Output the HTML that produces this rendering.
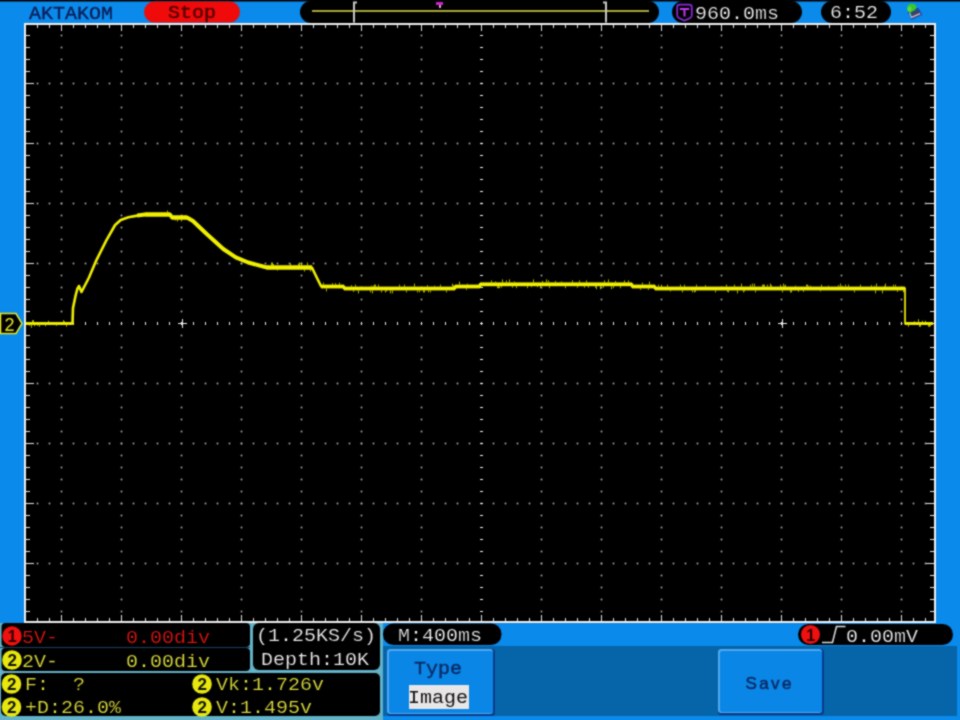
<!DOCTYPE html>
<html><head><meta charset="utf-8"><style>
html,body{margin:0;padding:0;width:960px;height:720px;overflow:hidden;background:#0a8aea}
svg{display:block;will-change:transform}
text{font-family:"Liberation Mono",monospace;white-space:pre}
text.sans{font-family:"Liberation Sans",sans-serif}
</style></head><body>
<svg width="960" height="720" viewBox="0 0 960 720">
<defs><filter id="bl" x="0" y="0" width="960" height="720" filterUnits="userSpaceOnUse" color-interpolation-filters="sRGB"><feConvolveMatrix order="3" kernelMatrix="1 2 1 2 8 2 1 2 1" divisor="20" edgeMode="duplicate" preserveAlpha="true"/></filter></defs>
<g filter="url(#bl)">
<rect x="0" y="0" width="960" height="720" fill="#0a8aea"/><rect x="0" y="0" width="960" height="1" fill="#000"/><rect x="0" y="1" width="960" height="1" fill="#05457a"/><rect x="24" y="23" width="912" height="600" fill="#f0f0f0"/><rect x="26" y="25" width="908" height="596" fill="#000"/><g fill="#a8a8a8"><circle cx="61.5" cy="35.5" r="0.95"/><circle cx="61.5" cy="47.5" r="0.95"/><circle cx="61.5" cy="59.5" r="0.95"/><circle cx="61.5" cy="71.5" r="0.95"/><circle cx="61.5" cy="83.5" r="0.95"/><circle cx="61.5" cy="95.5" r="0.95"/><circle cx="61.5" cy="107.5" r="0.95"/><circle cx="61.5" cy="119.5" r="0.95"/><circle cx="61.5" cy="131.5" r="0.95"/><circle cx="61.5" cy="143.5" r="0.95"/><circle cx="61.5" cy="155.5" r="0.95"/><circle cx="61.5" cy="167.5" r="0.95"/><circle cx="61.5" cy="179.5" r="0.95"/><circle cx="61.5" cy="191.5" r="0.95"/><circle cx="61.5" cy="203.5" r="0.95"/><circle cx="61.5" cy="215.5" r="0.95"/><circle cx="61.5" cy="227.5" r="0.95"/><circle cx="61.5" cy="239.5" r="0.95"/><circle cx="61.5" cy="251.5" r="0.95"/><circle cx="61.5" cy="263.5" r="0.95"/><circle cx="61.5" cy="275.5" r="0.95"/><circle cx="61.5" cy="287.5" r="0.95"/><circle cx="61.5" cy="299.5" r="0.95"/><circle cx="61.5" cy="311.5" r="0.95"/><circle cx="61.5" cy="323.5" r="0.95"/><circle cx="61.5" cy="335.5" r="0.95"/><circle cx="61.5" cy="347.5" r="0.95"/><circle cx="61.5" cy="359.5" r="0.95"/><circle cx="61.5" cy="371.5" r="0.95"/><circle cx="61.5" cy="383.5" r="0.95"/><circle cx="61.5" cy="395.5" r="0.95"/><circle cx="61.5" cy="407.5" r="0.95"/><circle cx="61.5" cy="419.5" r="0.95"/><circle cx="61.5" cy="431.5" r="0.95"/><circle cx="61.5" cy="443.5" r="0.95"/><circle cx="61.5" cy="455.5" r="0.95"/><circle cx="61.5" cy="467.5" r="0.95"/><circle cx="61.5" cy="479.5" r="0.95"/><circle cx="61.5" cy="491.5" r="0.95"/><circle cx="61.5" cy="503.5" r="0.95"/><circle cx="61.5" cy="515.5" r="0.95"/><circle cx="61.5" cy="527.5" r="0.95"/><circle cx="61.5" cy="539.5" r="0.95"/><circle cx="61.5" cy="551.5" r="0.95"/><circle cx="61.5" cy="563.5" r="0.95"/><circle cx="61.5" cy="575.5" r="0.95"/><circle cx="61.5" cy="587.5" r="0.95"/><circle cx="61.5" cy="599.5" r="0.95"/><circle cx="61.5" cy="611.5" r="0.95"/><circle cx="121.5" cy="35.5" r="0.95"/><circle cx="121.5" cy="47.5" r="0.95"/><circle cx="121.5" cy="59.5" r="0.95"/><circle cx="121.5" cy="71.5" r="0.95"/><circle cx="121.5" cy="83.5" r="0.95"/><circle cx="121.5" cy="95.5" r="0.95"/><circle cx="121.5" cy="107.5" r="0.95"/><circle cx="121.5" cy="119.5" r="0.95"/><circle cx="121.5" cy="131.5" r="0.95"/><circle cx="121.5" cy="143.5" r="0.95"/><circle cx="121.5" cy="155.5" r="0.95"/><circle cx="121.5" cy="167.5" r="0.95"/><circle cx="121.5" cy="179.5" r="0.95"/><circle cx="121.5" cy="191.5" r="0.95"/><circle cx="121.5" cy="203.5" r="0.95"/><circle cx="121.5" cy="215.5" r="0.95"/><circle cx="121.5" cy="227.5" r="0.95"/><circle cx="121.5" cy="239.5" r="0.95"/><circle cx="121.5" cy="251.5" r="0.95"/><circle cx="121.5" cy="263.5" r="0.95"/><circle cx="121.5" cy="275.5" r="0.95"/><circle cx="121.5" cy="287.5" r="0.95"/><circle cx="121.5" cy="299.5" r="0.95"/><circle cx="121.5" cy="311.5" r="0.95"/><circle cx="121.5" cy="323.5" r="0.95"/><circle cx="121.5" cy="335.5" r="0.95"/><circle cx="121.5" cy="347.5" r="0.95"/><circle cx="121.5" cy="359.5" r="0.95"/><circle cx="121.5" cy="371.5" r="0.95"/><circle cx="121.5" cy="383.5" r="0.95"/><circle cx="121.5" cy="395.5" r="0.95"/><circle cx="121.5" cy="407.5" r="0.95"/><circle cx="121.5" cy="419.5" r="0.95"/><circle cx="121.5" cy="431.5" r="0.95"/><circle cx="121.5" cy="443.5" r="0.95"/><circle cx="121.5" cy="455.5" r="0.95"/><circle cx="121.5" cy="467.5" r="0.95"/><circle cx="121.5" cy="479.5" r="0.95"/><circle cx="121.5" cy="491.5" r="0.95"/><circle cx="121.5" cy="503.5" r="0.95"/><circle cx="121.5" cy="515.5" r="0.95"/><circle cx="121.5" cy="527.5" r="0.95"/><circle cx="121.5" cy="539.5" r="0.95"/><circle cx="121.5" cy="551.5" r="0.95"/><circle cx="121.5" cy="563.5" r="0.95"/><circle cx="121.5" cy="575.5" r="0.95"/><circle cx="121.5" cy="587.5" r="0.95"/><circle cx="121.5" cy="599.5" r="0.95"/><circle cx="121.5" cy="611.5" r="0.95"/><circle cx="181.5" cy="35.5" r="0.95"/><circle cx="181.5" cy="47.5" r="0.95"/><circle cx="181.5" cy="59.5" r="0.95"/><circle cx="181.5" cy="71.5" r="0.95"/><circle cx="181.5" cy="83.5" r="0.95"/><circle cx="181.5" cy="95.5" r="0.95"/><circle cx="181.5" cy="107.5" r="0.95"/><circle cx="181.5" cy="119.5" r="0.95"/><circle cx="181.5" cy="131.5" r="0.95"/><circle cx="181.5" cy="143.5" r="0.95"/><circle cx="181.5" cy="155.5" r="0.95"/><circle cx="181.5" cy="167.5" r="0.95"/><circle cx="181.5" cy="179.5" r="0.95"/><circle cx="181.5" cy="191.5" r="0.95"/><circle cx="181.5" cy="203.5" r="0.95"/><circle cx="181.5" cy="215.5" r="0.95"/><circle cx="181.5" cy="227.5" r="0.95"/><circle cx="181.5" cy="239.5" r="0.95"/><circle cx="181.5" cy="251.5" r="0.95"/><circle cx="181.5" cy="263.5" r="0.95"/><circle cx="181.5" cy="275.5" r="0.95"/><circle cx="181.5" cy="287.5" r="0.95"/><circle cx="181.5" cy="299.5" r="0.95"/><circle cx="181.5" cy="311.5" r="0.95"/><circle cx="181.5" cy="323.5" r="0.95"/><circle cx="181.5" cy="335.5" r="0.95"/><circle cx="181.5" cy="347.5" r="0.95"/><circle cx="181.5" cy="359.5" r="0.95"/><circle cx="181.5" cy="371.5" r="0.95"/><circle cx="181.5" cy="383.5" r="0.95"/><circle cx="181.5" cy="395.5" r="0.95"/><circle cx="181.5" cy="407.5" r="0.95"/><circle cx="181.5" cy="419.5" r="0.95"/><circle cx="181.5" cy="431.5" r="0.95"/><circle cx="181.5" cy="443.5" r="0.95"/><circle cx="181.5" cy="455.5" r="0.95"/><circle cx="181.5" cy="467.5" r="0.95"/><circle cx="181.5" cy="479.5" r="0.95"/><circle cx="181.5" cy="491.5" r="0.95"/><circle cx="181.5" cy="503.5" r="0.95"/><circle cx="181.5" cy="515.5" r="0.95"/><circle cx="181.5" cy="527.5" r="0.95"/><circle cx="181.5" cy="539.5" r="0.95"/><circle cx="181.5" cy="551.5" r="0.95"/><circle cx="181.5" cy="563.5" r="0.95"/><circle cx="181.5" cy="575.5" r="0.95"/><circle cx="181.5" cy="587.5" r="0.95"/><circle cx="181.5" cy="599.5" r="0.95"/><circle cx="181.5" cy="611.5" r="0.95"/><circle cx="241.5" cy="35.5" r="0.95"/><circle cx="241.5" cy="47.5" r="0.95"/><circle cx="241.5" cy="59.5" r="0.95"/><circle cx="241.5" cy="71.5" r="0.95"/><circle cx="241.5" cy="83.5" r="0.95"/><circle cx="241.5" cy="95.5" r="0.95"/><circle cx="241.5" cy="107.5" r="0.95"/><circle cx="241.5" cy="119.5" r="0.95"/><circle cx="241.5" cy="131.5" r="0.95"/><circle cx="241.5" cy="143.5" r="0.95"/><circle cx="241.5" cy="155.5" r="0.95"/><circle cx="241.5" cy="167.5" r="0.95"/><circle cx="241.5" cy="179.5" r="0.95"/><circle cx="241.5" cy="191.5" r="0.95"/><circle cx="241.5" cy="203.5" r="0.95"/><circle cx="241.5" cy="215.5" r="0.95"/><circle cx="241.5" cy="227.5" r="0.95"/><circle cx="241.5" cy="239.5" r="0.95"/><circle cx="241.5" cy="251.5" r="0.95"/><circle cx="241.5" cy="263.5" r="0.95"/><circle cx="241.5" cy="275.5" r="0.95"/><circle cx="241.5" cy="287.5" r="0.95"/><circle cx="241.5" cy="299.5" r="0.95"/><circle cx="241.5" cy="311.5" r="0.95"/><circle cx="241.5" cy="323.5" r="0.95"/><circle cx="241.5" cy="335.5" r="0.95"/><circle cx="241.5" cy="347.5" r="0.95"/><circle cx="241.5" cy="359.5" r="0.95"/><circle cx="241.5" cy="371.5" r="0.95"/><circle cx="241.5" cy="383.5" r="0.95"/><circle cx="241.5" cy="395.5" r="0.95"/><circle cx="241.5" cy="407.5" r="0.95"/><circle cx="241.5" cy="419.5" r="0.95"/><circle cx="241.5" cy="431.5" r="0.95"/><circle cx="241.5" cy="443.5" r="0.95"/><circle cx="241.5" cy="455.5" r="0.95"/><circle cx="241.5" cy="467.5" r="0.95"/><circle cx="241.5" cy="479.5" r="0.95"/><circle cx="241.5" cy="491.5" r="0.95"/><circle cx="241.5" cy="503.5" r="0.95"/><circle cx="241.5" cy="515.5" r="0.95"/><circle cx="241.5" cy="527.5" r="0.95"/><circle cx="241.5" cy="539.5" r="0.95"/><circle cx="241.5" cy="551.5" r="0.95"/><circle cx="241.5" cy="563.5" r="0.95"/><circle cx="241.5" cy="575.5" r="0.95"/><circle cx="241.5" cy="587.5" r="0.95"/><circle cx="241.5" cy="599.5" r="0.95"/><circle cx="241.5" cy="611.5" r="0.95"/><circle cx="301.5" cy="35.5" r="0.95"/><circle cx="301.5" cy="47.5" r="0.95"/><circle cx="301.5" cy="59.5" r="0.95"/><circle cx="301.5" cy="71.5" r="0.95"/><circle cx="301.5" cy="83.5" r="0.95"/><circle cx="301.5" cy="95.5" r="0.95"/><circle cx="301.5" cy="107.5" r="0.95"/><circle cx="301.5" cy="119.5" r="0.95"/><circle cx="301.5" cy="131.5" r="0.95"/><circle cx="301.5" cy="143.5" r="0.95"/><circle cx="301.5" cy="155.5" r="0.95"/><circle cx="301.5" cy="167.5" r="0.95"/><circle cx="301.5" cy="179.5" r="0.95"/><circle cx="301.5" cy="191.5" r="0.95"/><circle cx="301.5" cy="203.5" r="0.95"/><circle cx="301.5" cy="215.5" r="0.95"/><circle cx="301.5" cy="227.5" r="0.95"/><circle cx="301.5" cy="239.5" r="0.95"/><circle cx="301.5" cy="251.5" r="0.95"/><circle cx="301.5" cy="263.5" r="0.95"/><circle cx="301.5" cy="275.5" r="0.95"/><circle cx="301.5" cy="287.5" r="0.95"/><circle cx="301.5" cy="299.5" r="0.95"/><circle cx="301.5" cy="311.5" r="0.95"/><circle cx="301.5" cy="323.5" r="0.95"/><circle cx="301.5" cy="335.5" r="0.95"/><circle cx="301.5" cy="347.5" r="0.95"/><circle cx="301.5" cy="359.5" r="0.95"/><circle cx="301.5" cy="371.5" r="0.95"/><circle cx="301.5" cy="383.5" r="0.95"/><circle cx="301.5" cy="395.5" r="0.95"/><circle cx="301.5" cy="407.5" r="0.95"/><circle cx="301.5" cy="419.5" r="0.95"/><circle cx="301.5" cy="431.5" r="0.95"/><circle cx="301.5" cy="443.5" r="0.95"/><circle cx="301.5" cy="455.5" r="0.95"/><circle cx="301.5" cy="467.5" r="0.95"/><circle cx="301.5" cy="479.5" r="0.95"/><circle cx="301.5" cy="491.5" r="0.95"/><circle cx="301.5" cy="503.5" r="0.95"/><circle cx="301.5" cy="515.5" r="0.95"/><circle cx="301.5" cy="527.5" r="0.95"/><circle cx="301.5" cy="539.5" r="0.95"/><circle cx="301.5" cy="551.5" r="0.95"/><circle cx="301.5" cy="563.5" r="0.95"/><circle cx="301.5" cy="575.5" r="0.95"/><circle cx="301.5" cy="587.5" r="0.95"/><circle cx="301.5" cy="599.5" r="0.95"/><circle cx="301.5" cy="611.5" r="0.95"/><circle cx="361.5" cy="35.5" r="0.95"/><circle cx="361.5" cy="47.5" r="0.95"/><circle cx="361.5" cy="59.5" r="0.95"/><circle cx="361.5" cy="71.5" r="0.95"/><circle cx="361.5" cy="83.5" r="0.95"/><circle cx="361.5" cy="95.5" r="0.95"/><circle cx="361.5" cy="107.5" r="0.95"/><circle cx="361.5" cy="119.5" r="0.95"/><circle cx="361.5" cy="131.5" r="0.95"/><circle cx="361.5" cy="143.5" r="0.95"/><circle cx="361.5" cy="155.5" r="0.95"/><circle cx="361.5" cy="167.5" r="0.95"/><circle cx="361.5" cy="179.5" r="0.95"/><circle cx="361.5" cy="191.5" r="0.95"/><circle cx="361.5" cy="203.5" r="0.95"/><circle cx="361.5" cy="215.5" r="0.95"/><circle cx="361.5" cy="227.5" r="0.95"/><circle cx="361.5" cy="239.5" r="0.95"/><circle cx="361.5" cy="251.5" r="0.95"/><circle cx="361.5" cy="263.5" r="0.95"/><circle cx="361.5" cy="275.5" r="0.95"/><circle cx="361.5" cy="287.5" r="0.95"/><circle cx="361.5" cy="299.5" r="0.95"/><circle cx="361.5" cy="311.5" r="0.95"/><circle cx="361.5" cy="323.5" r="0.95"/><circle cx="361.5" cy="335.5" r="0.95"/><circle cx="361.5" cy="347.5" r="0.95"/><circle cx="361.5" cy="359.5" r="0.95"/><circle cx="361.5" cy="371.5" r="0.95"/><circle cx="361.5" cy="383.5" r="0.95"/><circle cx="361.5" cy="395.5" r="0.95"/><circle cx="361.5" cy="407.5" r="0.95"/><circle cx="361.5" cy="419.5" r="0.95"/><circle cx="361.5" cy="431.5" r="0.95"/><circle cx="361.5" cy="443.5" r="0.95"/><circle cx="361.5" cy="455.5" r="0.95"/><circle cx="361.5" cy="467.5" r="0.95"/><circle cx="361.5" cy="479.5" r="0.95"/><circle cx="361.5" cy="491.5" r="0.95"/><circle cx="361.5" cy="503.5" r="0.95"/><circle cx="361.5" cy="515.5" r="0.95"/><circle cx="361.5" cy="527.5" r="0.95"/><circle cx="361.5" cy="539.5" r="0.95"/><circle cx="361.5" cy="551.5" r="0.95"/><circle cx="361.5" cy="563.5" r="0.95"/><circle cx="361.5" cy="575.5" r="0.95"/><circle cx="361.5" cy="587.5" r="0.95"/><circle cx="361.5" cy="599.5" r="0.95"/><circle cx="361.5" cy="611.5" r="0.95"/><circle cx="421.5" cy="35.5" r="0.95"/><circle cx="421.5" cy="47.5" r="0.95"/><circle cx="421.5" cy="59.5" r="0.95"/><circle cx="421.5" cy="71.5" r="0.95"/><circle cx="421.5" cy="83.5" r="0.95"/><circle cx="421.5" cy="95.5" r="0.95"/><circle cx="421.5" cy="107.5" r="0.95"/><circle cx="421.5" cy="119.5" r="0.95"/><circle cx="421.5" cy="131.5" r="0.95"/><circle cx="421.5" cy="143.5" r="0.95"/><circle cx="421.5" cy="155.5" r="0.95"/><circle cx="421.5" cy="167.5" r="0.95"/><circle cx="421.5" cy="179.5" r="0.95"/><circle cx="421.5" cy="191.5" r="0.95"/><circle cx="421.5" cy="203.5" r="0.95"/><circle cx="421.5" cy="215.5" r="0.95"/><circle cx="421.5" cy="227.5" r="0.95"/><circle cx="421.5" cy="239.5" r="0.95"/><circle cx="421.5" cy="251.5" r="0.95"/><circle cx="421.5" cy="263.5" r="0.95"/><circle cx="421.5" cy="275.5" r="0.95"/><circle cx="421.5" cy="287.5" r="0.95"/><circle cx="421.5" cy="299.5" r="0.95"/><circle cx="421.5" cy="311.5" r="0.95"/><circle cx="421.5" cy="323.5" r="0.95"/><circle cx="421.5" cy="335.5" r="0.95"/><circle cx="421.5" cy="347.5" r="0.95"/><circle cx="421.5" cy="359.5" r="0.95"/><circle cx="421.5" cy="371.5" r="0.95"/><circle cx="421.5" cy="383.5" r="0.95"/><circle cx="421.5" cy="395.5" r="0.95"/><circle cx="421.5" cy="407.5" r="0.95"/><circle cx="421.5" cy="419.5" r="0.95"/><circle cx="421.5" cy="431.5" r="0.95"/><circle cx="421.5" cy="443.5" r="0.95"/><circle cx="421.5" cy="455.5" r="0.95"/><circle cx="421.5" cy="467.5" r="0.95"/><circle cx="421.5" cy="479.5" r="0.95"/><circle cx="421.5" cy="491.5" r="0.95"/><circle cx="421.5" cy="503.5" r="0.95"/><circle cx="421.5" cy="515.5" r="0.95"/><circle cx="421.5" cy="527.5" r="0.95"/><circle cx="421.5" cy="539.5" r="0.95"/><circle cx="421.5" cy="551.5" r="0.95"/><circle cx="421.5" cy="563.5" r="0.95"/><circle cx="421.5" cy="575.5" r="0.95"/><circle cx="421.5" cy="587.5" r="0.95"/><circle cx="421.5" cy="599.5" r="0.95"/><circle cx="421.5" cy="611.5" r="0.95"/><circle cx="541.5" cy="35.5" r="0.95"/><circle cx="541.5" cy="47.5" r="0.95"/><circle cx="541.5" cy="59.5" r="0.95"/><circle cx="541.5" cy="71.5" r="0.95"/><circle cx="541.5" cy="83.5" r="0.95"/><circle cx="541.5" cy="95.5" r="0.95"/><circle cx="541.5" cy="107.5" r="0.95"/><circle cx="541.5" cy="119.5" r="0.95"/><circle cx="541.5" cy="131.5" r="0.95"/><circle cx="541.5" cy="143.5" r="0.95"/><circle cx="541.5" cy="155.5" r="0.95"/><circle cx="541.5" cy="167.5" r="0.95"/><circle cx="541.5" cy="179.5" r="0.95"/><circle cx="541.5" cy="191.5" r="0.95"/><circle cx="541.5" cy="203.5" r="0.95"/><circle cx="541.5" cy="215.5" r="0.95"/><circle cx="541.5" cy="227.5" r="0.95"/><circle cx="541.5" cy="239.5" r="0.95"/><circle cx="541.5" cy="251.5" r="0.95"/><circle cx="541.5" cy="263.5" r="0.95"/><circle cx="541.5" cy="275.5" r="0.95"/><circle cx="541.5" cy="287.5" r="0.95"/><circle cx="541.5" cy="299.5" r="0.95"/><circle cx="541.5" cy="311.5" r="0.95"/><circle cx="541.5" cy="323.5" r="0.95"/><circle cx="541.5" cy="335.5" r="0.95"/><circle cx="541.5" cy="347.5" r="0.95"/><circle cx="541.5" cy="359.5" r="0.95"/><circle cx="541.5" cy="371.5" r="0.95"/><circle cx="541.5" cy="383.5" r="0.95"/><circle cx="541.5" cy="395.5" r="0.95"/><circle cx="541.5" cy="407.5" r="0.95"/><circle cx="541.5" cy="419.5" r="0.95"/><circle cx="541.5" cy="431.5" r="0.95"/><circle cx="541.5" cy="443.5" r="0.95"/><circle cx="541.5" cy="455.5" r="0.95"/><circle cx="541.5" cy="467.5" r="0.95"/><circle cx="541.5" cy="479.5" r="0.95"/><circle cx="541.5" cy="491.5" r="0.95"/><circle cx="541.5" cy="503.5" r="0.95"/><circle cx="541.5" cy="515.5" r="0.95"/><circle cx="541.5" cy="527.5" r="0.95"/><circle cx="541.5" cy="539.5" r="0.95"/><circle cx="541.5" cy="551.5" r="0.95"/><circle cx="541.5" cy="563.5" r="0.95"/><circle cx="541.5" cy="575.5" r="0.95"/><circle cx="541.5" cy="587.5" r="0.95"/><circle cx="541.5" cy="599.5" r="0.95"/><circle cx="541.5" cy="611.5" r="0.95"/><circle cx="601.5" cy="35.5" r="0.95"/><circle cx="601.5" cy="47.5" r="0.95"/><circle cx="601.5" cy="59.5" r="0.95"/><circle cx="601.5" cy="71.5" r="0.95"/><circle cx="601.5" cy="83.5" r="0.95"/><circle cx="601.5" cy="95.5" r="0.95"/><circle cx="601.5" cy="107.5" r="0.95"/><circle cx="601.5" cy="119.5" r="0.95"/><circle cx="601.5" cy="131.5" r="0.95"/><circle cx="601.5" cy="143.5" r="0.95"/><circle cx="601.5" cy="155.5" r="0.95"/><circle cx="601.5" cy="167.5" r="0.95"/><circle cx="601.5" cy="179.5" r="0.95"/><circle cx="601.5" cy="191.5" r="0.95"/><circle cx="601.5" cy="203.5" r="0.95"/><circle cx="601.5" cy="215.5" r="0.95"/><circle cx="601.5" cy="227.5" r="0.95"/><circle cx="601.5" cy="239.5" r="0.95"/><circle cx="601.5" cy="251.5" r="0.95"/><circle cx="601.5" cy="263.5" r="0.95"/><circle cx="601.5" cy="275.5" r="0.95"/><circle cx="601.5" cy="287.5" r="0.95"/><circle cx="601.5" cy="299.5" r="0.95"/><circle cx="601.5" cy="311.5" r="0.95"/><circle cx="601.5" cy="323.5" r="0.95"/><circle cx="601.5" cy="335.5" r="0.95"/><circle cx="601.5" cy="347.5" r="0.95"/><circle cx="601.5" cy="359.5" r="0.95"/><circle cx="601.5" cy="371.5" r="0.95"/><circle cx="601.5" cy="383.5" r="0.95"/><circle cx="601.5" cy="395.5" r="0.95"/><circle cx="601.5" cy="407.5" r="0.95"/><circle cx="601.5" cy="419.5" r="0.95"/><circle cx="601.5" cy="431.5" r="0.95"/><circle cx="601.5" cy="443.5" r="0.95"/><circle cx="601.5" cy="455.5" r="0.95"/><circle cx="601.5" cy="467.5" r="0.95"/><circle cx="601.5" cy="479.5" r="0.95"/><circle cx="601.5" cy="491.5" r="0.95"/><circle cx="601.5" cy="503.5" r="0.95"/><circle cx="601.5" cy="515.5" r="0.95"/><circle cx="601.5" cy="527.5" r="0.95"/><circle cx="601.5" cy="539.5" r="0.95"/><circle cx="601.5" cy="551.5" r="0.95"/><circle cx="601.5" cy="563.5" r="0.95"/><circle cx="601.5" cy="575.5" r="0.95"/><circle cx="601.5" cy="587.5" r="0.95"/><circle cx="601.5" cy="599.5" r="0.95"/><circle cx="601.5" cy="611.5" r="0.95"/><circle cx="661.5" cy="35.5" r="0.95"/><circle cx="661.5" cy="47.5" r="0.95"/><circle cx="661.5" cy="59.5" r="0.95"/><circle cx="661.5" cy="71.5" r="0.95"/><circle cx="661.5" cy="83.5" r="0.95"/><circle cx="661.5" cy="95.5" r="0.95"/><circle cx="661.5" cy="107.5" r="0.95"/><circle cx="661.5" cy="119.5" r="0.95"/><circle cx="661.5" cy="131.5" r="0.95"/><circle cx="661.5" cy="143.5" r="0.95"/><circle cx="661.5" cy="155.5" r="0.95"/><circle cx="661.5" cy="167.5" r="0.95"/><circle cx="661.5" cy="179.5" r="0.95"/><circle cx="661.5" cy="191.5" r="0.95"/><circle cx="661.5" cy="203.5" r="0.95"/><circle cx="661.5" cy="215.5" r="0.95"/><circle cx="661.5" cy="227.5" r="0.95"/><circle cx="661.5" cy="239.5" r="0.95"/><circle cx="661.5" cy="251.5" r="0.95"/><circle cx="661.5" cy="263.5" r="0.95"/><circle cx="661.5" cy="275.5" r="0.95"/><circle cx="661.5" cy="287.5" r="0.95"/><circle cx="661.5" cy="299.5" r="0.95"/><circle cx="661.5" cy="311.5" r="0.95"/><circle cx="661.5" cy="323.5" r="0.95"/><circle cx="661.5" cy="335.5" r="0.95"/><circle cx="661.5" cy="347.5" r="0.95"/><circle cx="661.5" cy="359.5" r="0.95"/><circle cx="661.5" cy="371.5" r="0.95"/><circle cx="661.5" cy="383.5" r="0.95"/><circle cx="661.5" cy="395.5" r="0.95"/><circle cx="661.5" cy="407.5" r="0.95"/><circle cx="661.5" cy="419.5" r="0.95"/><circle cx="661.5" cy="431.5" r="0.95"/><circle cx="661.5" cy="443.5" r="0.95"/><circle cx="661.5" cy="455.5" r="0.95"/><circle cx="661.5" cy="467.5" r="0.95"/><circle cx="661.5" cy="479.5" r="0.95"/><circle cx="661.5" cy="491.5" r="0.95"/><circle cx="661.5" cy="503.5" r="0.95"/><circle cx="661.5" cy="515.5" r="0.95"/><circle cx="661.5" cy="527.5" r="0.95"/><circle cx="661.5" cy="539.5" r="0.95"/><circle cx="661.5" cy="551.5" r="0.95"/><circle cx="661.5" cy="563.5" r="0.95"/><circle cx="661.5" cy="575.5" r="0.95"/><circle cx="661.5" cy="587.5" r="0.95"/><circle cx="661.5" cy="599.5" r="0.95"/><circle cx="661.5" cy="611.5" r="0.95"/><circle cx="721.5" cy="35.5" r="0.95"/><circle cx="721.5" cy="47.5" r="0.95"/><circle cx="721.5" cy="59.5" r="0.95"/><circle cx="721.5" cy="71.5" r="0.95"/><circle cx="721.5" cy="83.5" r="0.95"/><circle cx="721.5" cy="95.5" r="0.95"/><circle cx="721.5" cy="107.5" r="0.95"/><circle cx="721.5" cy="119.5" r="0.95"/><circle cx="721.5" cy="131.5" r="0.95"/><circle cx="721.5" cy="143.5" r="0.95"/><circle cx="721.5" cy="155.5" r="0.95"/><circle cx="721.5" cy="167.5" r="0.95"/><circle cx="721.5" cy="179.5" r="0.95"/><circle cx="721.5" cy="191.5" r="0.95"/><circle cx="721.5" cy="203.5" r="0.95"/><circle cx="721.5" cy="215.5" r="0.95"/><circle cx="721.5" cy="227.5" r="0.95"/><circle cx="721.5" cy="239.5" r="0.95"/><circle cx="721.5" cy="251.5" r="0.95"/><circle cx="721.5" cy="263.5" r="0.95"/><circle cx="721.5" cy="275.5" r="0.95"/><circle cx="721.5" cy="287.5" r="0.95"/><circle cx="721.5" cy="299.5" r="0.95"/><circle cx="721.5" cy="311.5" r="0.95"/><circle cx="721.5" cy="323.5" r="0.95"/><circle cx="721.5" cy="335.5" r="0.95"/><circle cx="721.5" cy="347.5" r="0.95"/><circle cx="721.5" cy="359.5" r="0.95"/><circle cx="721.5" cy="371.5" r="0.95"/><circle cx="721.5" cy="383.5" r="0.95"/><circle cx="721.5" cy="395.5" r="0.95"/><circle cx="721.5" cy="407.5" r="0.95"/><circle cx="721.5" cy="419.5" r="0.95"/><circle cx="721.5" cy="431.5" r="0.95"/><circle cx="721.5" cy="443.5" r="0.95"/><circle cx="721.5" cy="455.5" r="0.95"/><circle cx="721.5" cy="467.5" r="0.95"/><circle cx="721.5" cy="479.5" r="0.95"/><circle cx="721.5" cy="491.5" r="0.95"/><circle cx="721.5" cy="503.5" r="0.95"/><circle cx="721.5" cy="515.5" r="0.95"/><circle cx="721.5" cy="527.5" r="0.95"/><circle cx="721.5" cy="539.5" r="0.95"/><circle cx="721.5" cy="551.5" r="0.95"/><circle cx="721.5" cy="563.5" r="0.95"/><circle cx="721.5" cy="575.5" r="0.95"/><circle cx="721.5" cy="587.5" r="0.95"/><circle cx="721.5" cy="599.5" r="0.95"/><circle cx="721.5" cy="611.5" r="0.95"/><circle cx="781.5" cy="35.5" r="0.95"/><circle cx="781.5" cy="47.5" r="0.95"/><circle cx="781.5" cy="59.5" r="0.95"/><circle cx="781.5" cy="71.5" r="0.95"/><circle cx="781.5" cy="83.5" r="0.95"/><circle cx="781.5" cy="95.5" r="0.95"/><circle cx="781.5" cy="107.5" r="0.95"/><circle cx="781.5" cy="119.5" r="0.95"/><circle cx="781.5" cy="131.5" r="0.95"/><circle cx="781.5" cy="143.5" r="0.95"/><circle cx="781.5" cy="155.5" r="0.95"/><circle cx="781.5" cy="167.5" r="0.95"/><circle cx="781.5" cy="179.5" r="0.95"/><circle cx="781.5" cy="191.5" r="0.95"/><circle cx="781.5" cy="203.5" r="0.95"/><circle cx="781.5" cy="215.5" r="0.95"/><circle cx="781.5" cy="227.5" r="0.95"/><circle cx="781.5" cy="239.5" r="0.95"/><circle cx="781.5" cy="251.5" r="0.95"/><circle cx="781.5" cy="263.5" r="0.95"/><circle cx="781.5" cy="275.5" r="0.95"/><circle cx="781.5" cy="287.5" r="0.95"/><circle cx="781.5" cy="299.5" r="0.95"/><circle cx="781.5" cy="311.5" r="0.95"/><circle cx="781.5" cy="323.5" r="0.95"/><circle cx="781.5" cy="335.5" r="0.95"/><circle cx="781.5" cy="347.5" r="0.95"/><circle cx="781.5" cy="359.5" r="0.95"/><circle cx="781.5" cy="371.5" r="0.95"/><circle cx="781.5" cy="383.5" r="0.95"/><circle cx="781.5" cy="395.5" r="0.95"/><circle cx="781.5" cy="407.5" r="0.95"/><circle cx="781.5" cy="419.5" r="0.95"/><circle cx="781.5" cy="431.5" r="0.95"/><circle cx="781.5" cy="443.5" r="0.95"/><circle cx="781.5" cy="455.5" r="0.95"/><circle cx="781.5" cy="467.5" r="0.95"/><circle cx="781.5" cy="479.5" r="0.95"/><circle cx="781.5" cy="491.5" r="0.95"/><circle cx="781.5" cy="503.5" r="0.95"/><circle cx="781.5" cy="515.5" r="0.95"/><circle cx="781.5" cy="527.5" r="0.95"/><circle cx="781.5" cy="539.5" r="0.95"/><circle cx="781.5" cy="551.5" r="0.95"/><circle cx="781.5" cy="563.5" r="0.95"/><circle cx="781.5" cy="575.5" r="0.95"/><circle cx="781.5" cy="587.5" r="0.95"/><circle cx="781.5" cy="599.5" r="0.95"/><circle cx="781.5" cy="611.5" r="0.95"/><circle cx="841.5" cy="35.5" r="0.95"/><circle cx="841.5" cy="47.5" r="0.95"/><circle cx="841.5" cy="59.5" r="0.95"/><circle cx="841.5" cy="71.5" r="0.95"/><circle cx="841.5" cy="83.5" r="0.95"/><circle cx="841.5" cy="95.5" r="0.95"/><circle cx="841.5" cy="107.5" r="0.95"/><circle cx="841.5" cy="119.5" r="0.95"/><circle cx="841.5" cy="131.5" r="0.95"/><circle cx="841.5" cy="143.5" r="0.95"/><circle cx="841.5" cy="155.5" r="0.95"/><circle cx="841.5" cy="167.5" r="0.95"/><circle cx="841.5" cy="179.5" r="0.95"/><circle cx="841.5" cy="191.5" r="0.95"/><circle cx="841.5" cy="203.5" r="0.95"/><circle cx="841.5" cy="215.5" r="0.95"/><circle cx="841.5" cy="227.5" r="0.95"/><circle cx="841.5" cy="239.5" r="0.95"/><circle cx="841.5" cy="251.5" r="0.95"/><circle cx="841.5" cy="263.5" r="0.95"/><circle cx="841.5" cy="275.5" r="0.95"/><circle cx="841.5" cy="287.5" r="0.95"/><circle cx="841.5" cy="299.5" r="0.95"/><circle cx="841.5" cy="311.5" r="0.95"/><circle cx="841.5" cy="323.5" r="0.95"/><circle cx="841.5" cy="335.5" r="0.95"/><circle cx="841.5" cy="347.5" r="0.95"/><circle cx="841.5" cy="359.5" r="0.95"/><circle cx="841.5" cy="371.5" r="0.95"/><circle cx="841.5" cy="383.5" r="0.95"/><circle cx="841.5" cy="395.5" r="0.95"/><circle cx="841.5" cy="407.5" r="0.95"/><circle cx="841.5" cy="419.5" r="0.95"/><circle cx="841.5" cy="431.5" r="0.95"/><circle cx="841.5" cy="443.5" r="0.95"/><circle cx="841.5" cy="455.5" r="0.95"/><circle cx="841.5" cy="467.5" r="0.95"/><circle cx="841.5" cy="479.5" r="0.95"/><circle cx="841.5" cy="491.5" r="0.95"/><circle cx="841.5" cy="503.5" r="0.95"/><circle cx="841.5" cy="515.5" r="0.95"/><circle cx="841.5" cy="527.5" r="0.95"/><circle cx="841.5" cy="539.5" r="0.95"/><circle cx="841.5" cy="551.5" r="0.95"/><circle cx="841.5" cy="563.5" r="0.95"/><circle cx="841.5" cy="575.5" r="0.95"/><circle cx="841.5" cy="587.5" r="0.95"/><circle cx="841.5" cy="599.5" r="0.95"/><circle cx="841.5" cy="611.5" r="0.95"/><circle cx="901.5" cy="35.5" r="0.95"/><circle cx="901.5" cy="47.5" r="0.95"/><circle cx="901.5" cy="59.5" r="0.95"/><circle cx="901.5" cy="71.5" r="0.95"/><circle cx="901.5" cy="83.5" r="0.95"/><circle cx="901.5" cy="95.5" r="0.95"/><circle cx="901.5" cy="107.5" r="0.95"/><circle cx="901.5" cy="119.5" r="0.95"/><circle cx="901.5" cy="131.5" r="0.95"/><circle cx="901.5" cy="143.5" r="0.95"/><circle cx="901.5" cy="155.5" r="0.95"/><circle cx="901.5" cy="167.5" r="0.95"/><circle cx="901.5" cy="179.5" r="0.95"/><circle cx="901.5" cy="191.5" r="0.95"/><circle cx="901.5" cy="203.5" r="0.95"/><circle cx="901.5" cy="215.5" r="0.95"/><circle cx="901.5" cy="227.5" r="0.95"/><circle cx="901.5" cy="239.5" r="0.95"/><circle cx="901.5" cy="251.5" r="0.95"/><circle cx="901.5" cy="263.5" r="0.95"/><circle cx="901.5" cy="275.5" r="0.95"/><circle cx="901.5" cy="287.5" r="0.95"/><circle cx="901.5" cy="299.5" r="0.95"/><circle cx="901.5" cy="311.5" r="0.95"/><circle cx="901.5" cy="323.5" r="0.95"/><circle cx="901.5" cy="335.5" r="0.95"/><circle cx="901.5" cy="347.5" r="0.95"/><circle cx="901.5" cy="359.5" r="0.95"/><circle cx="901.5" cy="371.5" r="0.95"/><circle cx="901.5" cy="383.5" r="0.95"/><circle cx="901.5" cy="395.5" r="0.95"/><circle cx="901.5" cy="407.5" r="0.95"/><circle cx="901.5" cy="419.5" r="0.95"/><circle cx="901.5" cy="431.5" r="0.95"/><circle cx="901.5" cy="443.5" r="0.95"/><circle cx="901.5" cy="455.5" r="0.95"/><circle cx="901.5" cy="467.5" r="0.95"/><circle cx="901.5" cy="479.5" r="0.95"/><circle cx="901.5" cy="491.5" r="0.95"/><circle cx="901.5" cy="503.5" r="0.95"/><circle cx="901.5" cy="515.5" r="0.95"/><circle cx="901.5" cy="527.5" r="0.95"/><circle cx="901.5" cy="539.5" r="0.95"/><circle cx="901.5" cy="551.5" r="0.95"/><circle cx="901.5" cy="563.5" r="0.95"/><circle cx="901.5" cy="575.5" r="0.95"/><circle cx="901.5" cy="587.5" r="0.95"/><circle cx="901.5" cy="599.5" r="0.95"/><circle cx="901.5" cy="611.5" r="0.95"/><circle cx="37.5" cy="83.5" r="0.95"/><circle cx="49.5" cy="83.5" r="0.95"/><circle cx="61.5" cy="83.5" r="0.95"/><circle cx="73.5" cy="83.5" r="0.95"/><circle cx="85.5" cy="83.5" r="0.95"/><circle cx="97.5" cy="83.5" r="0.95"/><circle cx="109.5" cy="83.5" r="0.95"/><circle cx="121.5" cy="83.5" r="0.95"/><circle cx="133.5" cy="83.5" r="0.95"/><circle cx="145.5" cy="83.5" r="0.95"/><circle cx="157.5" cy="83.5" r="0.95"/><circle cx="169.5" cy="83.5" r="0.95"/><circle cx="181.5" cy="83.5" r="0.95"/><circle cx="193.5" cy="83.5" r="0.95"/><circle cx="205.5" cy="83.5" r="0.95"/><circle cx="217.5" cy="83.5" r="0.95"/><circle cx="229.5" cy="83.5" r="0.95"/><circle cx="241.5" cy="83.5" r="0.95"/><circle cx="253.5" cy="83.5" r="0.95"/><circle cx="265.5" cy="83.5" r="0.95"/><circle cx="277.5" cy="83.5" r="0.95"/><circle cx="289.5" cy="83.5" r="0.95"/><circle cx="301.5" cy="83.5" r="0.95"/><circle cx="313.5" cy="83.5" r="0.95"/><circle cx="325.5" cy="83.5" r="0.95"/><circle cx="337.5" cy="83.5" r="0.95"/><circle cx="349.5" cy="83.5" r="0.95"/><circle cx="361.5" cy="83.5" r="0.95"/><circle cx="373.5" cy="83.5" r="0.95"/><circle cx="385.5" cy="83.5" r="0.95"/><circle cx="397.5" cy="83.5" r="0.95"/><circle cx="409.5" cy="83.5" r="0.95"/><circle cx="421.5" cy="83.5" r="0.95"/><circle cx="433.5" cy="83.5" r="0.95"/><circle cx="445.5" cy="83.5" r="0.95"/><circle cx="457.5" cy="83.5" r="0.95"/><circle cx="469.5" cy="83.5" r="0.95"/><circle cx="481.5" cy="83.5" r="0.95"/><circle cx="493.5" cy="83.5" r="0.95"/><circle cx="505.5" cy="83.5" r="0.95"/><circle cx="517.5" cy="83.5" r="0.95"/><circle cx="529.5" cy="83.5" r="0.95"/><circle cx="541.5" cy="83.5" r="0.95"/><circle cx="553.5" cy="83.5" r="0.95"/><circle cx="565.5" cy="83.5" r="0.95"/><circle cx="577.5" cy="83.5" r="0.95"/><circle cx="589.5" cy="83.5" r="0.95"/><circle cx="601.5" cy="83.5" r="0.95"/><circle cx="613.5" cy="83.5" r="0.95"/><circle cx="625.5" cy="83.5" r="0.95"/><circle cx="637.5" cy="83.5" r="0.95"/><circle cx="649.5" cy="83.5" r="0.95"/><circle cx="661.5" cy="83.5" r="0.95"/><circle cx="673.5" cy="83.5" r="0.95"/><circle cx="685.5" cy="83.5" r="0.95"/><circle cx="697.5" cy="83.5" r="0.95"/><circle cx="709.5" cy="83.5" r="0.95"/><circle cx="721.5" cy="83.5" r="0.95"/><circle cx="733.5" cy="83.5" r="0.95"/><circle cx="745.5" cy="83.5" r="0.95"/><circle cx="757.5" cy="83.5" r="0.95"/><circle cx="769.5" cy="83.5" r="0.95"/><circle cx="781.5" cy="83.5" r="0.95"/><circle cx="793.5" cy="83.5" r="0.95"/><circle cx="805.5" cy="83.5" r="0.95"/><circle cx="817.5" cy="83.5" r="0.95"/><circle cx="829.5" cy="83.5" r="0.95"/><circle cx="841.5" cy="83.5" r="0.95"/><circle cx="853.5" cy="83.5" r="0.95"/><circle cx="865.5" cy="83.5" r="0.95"/><circle cx="877.5" cy="83.5" r="0.95"/><circle cx="889.5" cy="83.5" r="0.95"/><circle cx="901.5" cy="83.5" r="0.95"/><circle cx="913.5" cy="83.5" r="0.95"/><circle cx="925.5" cy="83.5" r="0.95"/><circle cx="37.5" cy="143.5" r="0.95"/><circle cx="49.5" cy="143.5" r="0.95"/><circle cx="61.5" cy="143.5" r="0.95"/><circle cx="73.5" cy="143.5" r="0.95"/><circle cx="85.5" cy="143.5" r="0.95"/><circle cx="97.5" cy="143.5" r="0.95"/><circle cx="109.5" cy="143.5" r="0.95"/><circle cx="121.5" cy="143.5" r="0.95"/><circle cx="133.5" cy="143.5" r="0.95"/><circle cx="145.5" cy="143.5" r="0.95"/><circle cx="157.5" cy="143.5" r="0.95"/><circle cx="169.5" cy="143.5" r="0.95"/><circle cx="181.5" cy="143.5" r="0.95"/><circle cx="193.5" cy="143.5" r="0.95"/><circle cx="205.5" cy="143.5" r="0.95"/><circle cx="217.5" cy="143.5" r="0.95"/><circle cx="229.5" cy="143.5" r="0.95"/><circle cx="241.5" cy="143.5" r="0.95"/><circle cx="253.5" cy="143.5" r="0.95"/><circle cx="265.5" cy="143.5" r="0.95"/><circle cx="277.5" cy="143.5" r="0.95"/><circle cx="289.5" cy="143.5" r="0.95"/><circle cx="301.5" cy="143.5" r="0.95"/><circle cx="313.5" cy="143.5" r="0.95"/><circle cx="325.5" cy="143.5" r="0.95"/><circle cx="337.5" cy="143.5" r="0.95"/><circle cx="349.5" cy="143.5" r="0.95"/><circle cx="361.5" cy="143.5" r="0.95"/><circle cx="373.5" cy="143.5" r="0.95"/><circle cx="385.5" cy="143.5" r="0.95"/><circle cx="397.5" cy="143.5" r="0.95"/><circle cx="409.5" cy="143.5" r="0.95"/><circle cx="421.5" cy="143.5" r="0.95"/><circle cx="433.5" cy="143.5" r="0.95"/><circle cx="445.5" cy="143.5" r="0.95"/><circle cx="457.5" cy="143.5" r="0.95"/><circle cx="469.5" cy="143.5" r="0.95"/><circle cx="481.5" cy="143.5" r="0.95"/><circle cx="493.5" cy="143.5" r="0.95"/><circle cx="505.5" cy="143.5" r="0.95"/><circle cx="517.5" cy="143.5" r="0.95"/><circle cx="529.5" cy="143.5" r="0.95"/><circle cx="541.5" cy="143.5" r="0.95"/><circle cx="553.5" cy="143.5" r="0.95"/><circle cx="565.5" cy="143.5" r="0.95"/><circle cx="577.5" cy="143.5" r="0.95"/><circle cx="589.5" cy="143.5" r="0.95"/><circle cx="601.5" cy="143.5" r="0.95"/><circle cx="613.5" cy="143.5" r="0.95"/><circle cx="625.5" cy="143.5" r="0.95"/><circle cx="637.5" cy="143.5" r="0.95"/><circle cx="649.5" cy="143.5" r="0.95"/><circle cx="661.5" cy="143.5" r="0.95"/><circle cx="673.5" cy="143.5" r="0.95"/><circle cx="685.5" cy="143.5" r="0.95"/><circle cx="697.5" cy="143.5" r="0.95"/><circle cx="709.5" cy="143.5" r="0.95"/><circle cx="721.5" cy="143.5" r="0.95"/><circle cx="733.5" cy="143.5" r="0.95"/><circle cx="745.5" cy="143.5" r="0.95"/><circle cx="757.5" cy="143.5" r="0.95"/><circle cx="769.5" cy="143.5" r="0.95"/><circle cx="781.5" cy="143.5" r="0.95"/><circle cx="793.5" cy="143.5" r="0.95"/><circle cx="805.5" cy="143.5" r="0.95"/><circle cx="817.5" cy="143.5" r="0.95"/><circle cx="829.5" cy="143.5" r="0.95"/><circle cx="841.5" cy="143.5" r="0.95"/><circle cx="853.5" cy="143.5" r="0.95"/><circle cx="865.5" cy="143.5" r="0.95"/><circle cx="877.5" cy="143.5" r="0.95"/><circle cx="889.5" cy="143.5" r="0.95"/><circle cx="901.5" cy="143.5" r="0.95"/><circle cx="913.5" cy="143.5" r="0.95"/><circle cx="925.5" cy="143.5" r="0.95"/><circle cx="37.5" cy="203.5" r="0.95"/><circle cx="49.5" cy="203.5" r="0.95"/><circle cx="61.5" cy="203.5" r="0.95"/><circle cx="73.5" cy="203.5" r="0.95"/><circle cx="85.5" cy="203.5" r="0.95"/><circle cx="97.5" cy="203.5" r="0.95"/><circle cx="109.5" cy="203.5" r="0.95"/><circle cx="121.5" cy="203.5" r="0.95"/><circle cx="133.5" cy="203.5" r="0.95"/><circle cx="145.5" cy="203.5" r="0.95"/><circle cx="157.5" cy="203.5" r="0.95"/><circle cx="169.5" cy="203.5" r="0.95"/><circle cx="181.5" cy="203.5" r="0.95"/><circle cx="193.5" cy="203.5" r="0.95"/><circle cx="205.5" cy="203.5" r="0.95"/><circle cx="217.5" cy="203.5" r="0.95"/><circle cx="229.5" cy="203.5" r="0.95"/><circle cx="241.5" cy="203.5" r="0.95"/><circle cx="253.5" cy="203.5" r="0.95"/><circle cx="265.5" cy="203.5" r="0.95"/><circle cx="277.5" cy="203.5" r="0.95"/><circle cx="289.5" cy="203.5" r="0.95"/><circle cx="301.5" cy="203.5" r="0.95"/><circle cx="313.5" cy="203.5" r="0.95"/><circle cx="325.5" cy="203.5" r="0.95"/><circle cx="337.5" cy="203.5" r="0.95"/><circle cx="349.5" cy="203.5" r="0.95"/><circle cx="361.5" cy="203.5" r="0.95"/><circle cx="373.5" cy="203.5" r="0.95"/><circle cx="385.5" cy="203.5" r="0.95"/><circle cx="397.5" cy="203.5" r="0.95"/><circle cx="409.5" cy="203.5" r="0.95"/><circle cx="421.5" cy="203.5" r="0.95"/><circle cx="433.5" cy="203.5" r="0.95"/><circle cx="445.5" cy="203.5" r="0.95"/><circle cx="457.5" cy="203.5" r="0.95"/><circle cx="469.5" cy="203.5" r="0.95"/><circle cx="481.5" cy="203.5" r="0.95"/><circle cx="493.5" cy="203.5" r="0.95"/><circle cx="505.5" cy="203.5" r="0.95"/><circle cx="517.5" cy="203.5" r="0.95"/><circle cx="529.5" cy="203.5" r="0.95"/><circle cx="541.5" cy="203.5" r="0.95"/><circle cx="553.5" cy="203.5" r="0.95"/><circle cx="565.5" cy="203.5" r="0.95"/><circle cx="577.5" cy="203.5" r="0.95"/><circle cx="589.5" cy="203.5" r="0.95"/><circle cx="601.5" cy="203.5" r="0.95"/><circle cx="613.5" cy="203.5" r="0.95"/><circle cx="625.5" cy="203.5" r="0.95"/><circle cx="637.5" cy="203.5" r="0.95"/><circle cx="649.5" cy="203.5" r="0.95"/><circle cx="661.5" cy="203.5" r="0.95"/><circle cx="673.5" cy="203.5" r="0.95"/><circle cx="685.5" cy="203.5" r="0.95"/><circle cx="697.5" cy="203.5" r="0.95"/><circle cx="709.5" cy="203.5" r="0.95"/><circle cx="721.5" cy="203.5" r="0.95"/><circle cx="733.5" cy="203.5" r="0.95"/><circle cx="745.5" cy="203.5" r="0.95"/><circle cx="757.5" cy="203.5" r="0.95"/><circle cx="769.5" cy="203.5" r="0.95"/><circle cx="781.5" cy="203.5" r="0.95"/><circle cx="793.5" cy="203.5" r="0.95"/><circle cx="805.5" cy="203.5" r="0.95"/><circle cx="817.5" cy="203.5" r="0.95"/><circle cx="829.5" cy="203.5" r="0.95"/><circle cx="841.5" cy="203.5" r="0.95"/><circle cx="853.5" cy="203.5" r="0.95"/><circle cx="865.5" cy="203.5" r="0.95"/><circle cx="877.5" cy="203.5" r="0.95"/><circle cx="889.5" cy="203.5" r="0.95"/><circle cx="901.5" cy="203.5" r="0.95"/><circle cx="913.5" cy="203.5" r="0.95"/><circle cx="925.5" cy="203.5" r="0.95"/><circle cx="37.5" cy="263.5" r="0.95"/><circle cx="49.5" cy="263.5" r="0.95"/><circle cx="61.5" cy="263.5" r="0.95"/><circle cx="73.5" cy="263.5" r="0.95"/><circle cx="85.5" cy="263.5" r="0.95"/><circle cx="97.5" cy="263.5" r="0.95"/><circle cx="109.5" cy="263.5" r="0.95"/><circle cx="121.5" cy="263.5" r="0.95"/><circle cx="133.5" cy="263.5" r="0.95"/><circle cx="145.5" cy="263.5" r="0.95"/><circle cx="157.5" cy="263.5" r="0.95"/><circle cx="169.5" cy="263.5" r="0.95"/><circle cx="181.5" cy="263.5" r="0.95"/><circle cx="193.5" cy="263.5" r="0.95"/><circle cx="205.5" cy="263.5" r="0.95"/><circle cx="217.5" cy="263.5" r="0.95"/><circle cx="229.5" cy="263.5" r="0.95"/><circle cx="241.5" cy="263.5" r="0.95"/><circle cx="253.5" cy="263.5" r="0.95"/><circle cx="265.5" cy="263.5" r="0.95"/><circle cx="277.5" cy="263.5" r="0.95"/><circle cx="289.5" cy="263.5" r="0.95"/><circle cx="301.5" cy="263.5" r="0.95"/><circle cx="313.5" cy="263.5" r="0.95"/><circle cx="325.5" cy="263.5" r="0.95"/><circle cx="337.5" cy="263.5" r="0.95"/><circle cx="349.5" cy="263.5" r="0.95"/><circle cx="361.5" cy="263.5" r="0.95"/><circle cx="373.5" cy="263.5" r="0.95"/><circle cx="385.5" cy="263.5" r="0.95"/><circle cx="397.5" cy="263.5" r="0.95"/><circle cx="409.5" cy="263.5" r="0.95"/><circle cx="421.5" cy="263.5" r="0.95"/><circle cx="433.5" cy="263.5" r="0.95"/><circle cx="445.5" cy="263.5" r="0.95"/><circle cx="457.5" cy="263.5" r="0.95"/><circle cx="469.5" cy="263.5" r="0.95"/><circle cx="481.5" cy="263.5" r="0.95"/><circle cx="493.5" cy="263.5" r="0.95"/><circle cx="505.5" cy="263.5" r="0.95"/><circle cx="517.5" cy="263.5" r="0.95"/><circle cx="529.5" cy="263.5" r="0.95"/><circle cx="541.5" cy="263.5" r="0.95"/><circle cx="553.5" cy="263.5" r="0.95"/><circle cx="565.5" cy="263.5" r="0.95"/><circle cx="577.5" cy="263.5" r="0.95"/><circle cx="589.5" cy="263.5" r="0.95"/><circle cx="601.5" cy="263.5" r="0.95"/><circle cx="613.5" cy="263.5" r="0.95"/><circle cx="625.5" cy="263.5" r="0.95"/><circle cx="637.5" cy="263.5" r="0.95"/><circle cx="649.5" cy="263.5" r="0.95"/><circle cx="661.5" cy="263.5" r="0.95"/><circle cx="673.5" cy="263.5" r="0.95"/><circle cx="685.5" cy="263.5" r="0.95"/><circle cx="697.5" cy="263.5" r="0.95"/><circle cx="709.5" cy="263.5" r="0.95"/><circle cx="721.5" cy="263.5" r="0.95"/><circle cx="733.5" cy="263.5" r="0.95"/><circle cx="745.5" cy="263.5" r="0.95"/><circle cx="757.5" cy="263.5" r="0.95"/><circle cx="769.5" cy="263.5" r="0.95"/><circle cx="781.5" cy="263.5" r="0.95"/><circle cx="793.5" cy="263.5" r="0.95"/><circle cx="805.5" cy="263.5" r="0.95"/><circle cx="817.5" cy="263.5" r="0.95"/><circle cx="829.5" cy="263.5" r="0.95"/><circle cx="841.5" cy="263.5" r="0.95"/><circle cx="853.5" cy="263.5" r="0.95"/><circle cx="865.5" cy="263.5" r="0.95"/><circle cx="877.5" cy="263.5" r="0.95"/><circle cx="889.5" cy="263.5" r="0.95"/><circle cx="901.5" cy="263.5" r="0.95"/><circle cx="913.5" cy="263.5" r="0.95"/><circle cx="925.5" cy="263.5" r="0.95"/><circle cx="37.5" cy="383.5" r="0.95"/><circle cx="49.5" cy="383.5" r="0.95"/><circle cx="61.5" cy="383.5" r="0.95"/><circle cx="73.5" cy="383.5" r="0.95"/><circle cx="85.5" cy="383.5" r="0.95"/><circle cx="97.5" cy="383.5" r="0.95"/><circle cx="109.5" cy="383.5" r="0.95"/><circle cx="121.5" cy="383.5" r="0.95"/><circle cx="133.5" cy="383.5" r="0.95"/><circle cx="145.5" cy="383.5" r="0.95"/><circle cx="157.5" cy="383.5" r="0.95"/><circle cx="169.5" cy="383.5" r="0.95"/><circle cx="181.5" cy="383.5" r="0.95"/><circle cx="193.5" cy="383.5" r="0.95"/><circle cx="205.5" cy="383.5" r="0.95"/><circle cx="217.5" cy="383.5" r="0.95"/><circle cx="229.5" cy="383.5" r="0.95"/><circle cx="241.5" cy="383.5" r="0.95"/><circle cx="253.5" cy="383.5" r="0.95"/><circle cx="265.5" cy="383.5" r="0.95"/><circle cx="277.5" cy="383.5" r="0.95"/><circle cx="289.5" cy="383.5" r="0.95"/><circle cx="301.5" cy="383.5" r="0.95"/><circle cx="313.5" cy="383.5" r="0.95"/><circle cx="325.5" cy="383.5" r="0.95"/><circle cx="337.5" cy="383.5" r="0.95"/><circle cx="349.5" cy="383.5" r="0.95"/><circle cx="361.5" cy="383.5" r="0.95"/><circle cx="373.5" cy="383.5" r="0.95"/><circle cx="385.5" cy="383.5" r="0.95"/><circle cx="397.5" cy="383.5" r="0.95"/><circle cx="409.5" cy="383.5" r="0.95"/><circle cx="421.5" cy="383.5" r="0.95"/><circle cx="433.5" cy="383.5" r="0.95"/><circle cx="445.5" cy="383.5" r="0.95"/><circle cx="457.5" cy="383.5" r="0.95"/><circle cx="469.5" cy="383.5" r="0.95"/><circle cx="481.5" cy="383.5" r="0.95"/><circle cx="493.5" cy="383.5" r="0.95"/><circle cx="505.5" cy="383.5" r="0.95"/><circle cx="517.5" cy="383.5" r="0.95"/><circle cx="529.5" cy="383.5" r="0.95"/><circle cx="541.5" cy="383.5" r="0.95"/><circle cx="553.5" cy="383.5" r="0.95"/><circle cx="565.5" cy="383.5" r="0.95"/><circle cx="577.5" cy="383.5" r="0.95"/><circle cx="589.5" cy="383.5" r="0.95"/><circle cx="601.5" cy="383.5" r="0.95"/><circle cx="613.5" cy="383.5" r="0.95"/><circle cx="625.5" cy="383.5" r="0.95"/><circle cx="637.5" cy="383.5" r="0.95"/><circle cx="649.5" cy="383.5" r="0.95"/><circle cx="661.5" cy="383.5" r="0.95"/><circle cx="673.5" cy="383.5" r="0.95"/><circle cx="685.5" cy="383.5" r="0.95"/><circle cx="697.5" cy="383.5" r="0.95"/><circle cx="709.5" cy="383.5" r="0.95"/><circle cx="721.5" cy="383.5" r="0.95"/><circle cx="733.5" cy="383.5" r="0.95"/><circle cx="745.5" cy="383.5" r="0.95"/><circle cx="757.5" cy="383.5" r="0.95"/><circle cx="769.5" cy="383.5" r="0.95"/><circle cx="781.5" cy="383.5" r="0.95"/><circle cx="793.5" cy="383.5" r="0.95"/><circle cx="805.5" cy="383.5" r="0.95"/><circle cx="817.5" cy="383.5" r="0.95"/><circle cx="829.5" cy="383.5" r="0.95"/><circle cx="841.5" cy="383.5" r="0.95"/><circle cx="853.5" cy="383.5" r="0.95"/><circle cx="865.5" cy="383.5" r="0.95"/><circle cx="877.5" cy="383.5" r="0.95"/><circle cx="889.5" cy="383.5" r="0.95"/><circle cx="901.5" cy="383.5" r="0.95"/><circle cx="913.5" cy="383.5" r="0.95"/><circle cx="925.5" cy="383.5" r="0.95"/><circle cx="37.5" cy="443.5" r="0.95"/><circle cx="49.5" cy="443.5" r="0.95"/><circle cx="61.5" cy="443.5" r="0.95"/><circle cx="73.5" cy="443.5" r="0.95"/><circle cx="85.5" cy="443.5" r="0.95"/><circle cx="97.5" cy="443.5" r="0.95"/><circle cx="109.5" cy="443.5" r="0.95"/><circle cx="121.5" cy="443.5" r="0.95"/><circle cx="133.5" cy="443.5" r="0.95"/><circle cx="145.5" cy="443.5" r="0.95"/><circle cx="157.5" cy="443.5" r="0.95"/><circle cx="169.5" cy="443.5" r="0.95"/><circle cx="181.5" cy="443.5" r="0.95"/><circle cx="193.5" cy="443.5" r="0.95"/><circle cx="205.5" cy="443.5" r="0.95"/><circle cx="217.5" cy="443.5" r="0.95"/><circle cx="229.5" cy="443.5" r="0.95"/><circle cx="241.5" cy="443.5" r="0.95"/><circle cx="253.5" cy="443.5" r="0.95"/><circle cx="265.5" cy="443.5" r="0.95"/><circle cx="277.5" cy="443.5" r="0.95"/><circle cx="289.5" cy="443.5" r="0.95"/><circle cx="301.5" cy="443.5" r="0.95"/><circle cx="313.5" cy="443.5" r="0.95"/><circle cx="325.5" cy="443.5" r="0.95"/><circle cx="337.5" cy="443.5" r="0.95"/><circle cx="349.5" cy="443.5" r="0.95"/><circle cx="361.5" cy="443.5" r="0.95"/><circle cx="373.5" cy="443.5" r="0.95"/><circle cx="385.5" cy="443.5" r="0.95"/><circle cx="397.5" cy="443.5" r="0.95"/><circle cx="409.5" cy="443.5" r="0.95"/><circle cx="421.5" cy="443.5" r="0.95"/><circle cx="433.5" cy="443.5" r="0.95"/><circle cx="445.5" cy="443.5" r="0.95"/><circle cx="457.5" cy="443.5" r="0.95"/><circle cx="469.5" cy="443.5" r="0.95"/><circle cx="481.5" cy="443.5" r="0.95"/><circle cx="493.5" cy="443.5" r="0.95"/><circle cx="505.5" cy="443.5" r="0.95"/><circle cx="517.5" cy="443.5" r="0.95"/><circle cx="529.5" cy="443.5" r="0.95"/><circle cx="541.5" cy="443.5" r="0.95"/><circle cx="553.5" cy="443.5" r="0.95"/><circle cx="565.5" cy="443.5" r="0.95"/><circle cx="577.5" cy="443.5" r="0.95"/><circle cx="589.5" cy="443.5" r="0.95"/><circle cx="601.5" cy="443.5" r="0.95"/><circle cx="613.5" cy="443.5" r="0.95"/><circle cx="625.5" cy="443.5" r="0.95"/><circle cx="637.5" cy="443.5" r="0.95"/><circle cx="649.5" cy="443.5" r="0.95"/><circle cx="661.5" cy="443.5" r="0.95"/><circle cx="673.5" cy="443.5" r="0.95"/><circle cx="685.5" cy="443.5" r="0.95"/><circle cx="697.5" cy="443.5" r="0.95"/><circle cx="709.5" cy="443.5" r="0.95"/><circle cx="721.5" cy="443.5" r="0.95"/><circle cx="733.5" cy="443.5" r="0.95"/><circle cx="745.5" cy="443.5" r="0.95"/><circle cx="757.5" cy="443.5" r="0.95"/><circle cx="769.5" cy="443.5" r="0.95"/><circle cx="781.5" cy="443.5" r="0.95"/><circle cx="793.5" cy="443.5" r="0.95"/><circle cx="805.5" cy="443.5" r="0.95"/><circle cx="817.5" cy="443.5" r="0.95"/><circle cx="829.5" cy="443.5" r="0.95"/><circle cx="841.5" cy="443.5" r="0.95"/><circle cx="853.5" cy="443.5" r="0.95"/><circle cx="865.5" cy="443.5" r="0.95"/><circle cx="877.5" cy="443.5" r="0.95"/><circle cx="889.5" cy="443.5" r="0.95"/><circle cx="901.5" cy="443.5" r="0.95"/><circle cx="913.5" cy="443.5" r="0.95"/><circle cx="925.5" cy="443.5" r="0.95"/><circle cx="37.5" cy="503.5" r="0.95"/><circle cx="49.5" cy="503.5" r="0.95"/><circle cx="61.5" cy="503.5" r="0.95"/><circle cx="73.5" cy="503.5" r="0.95"/><circle cx="85.5" cy="503.5" r="0.95"/><circle cx="97.5" cy="503.5" r="0.95"/><circle cx="109.5" cy="503.5" r="0.95"/><circle cx="121.5" cy="503.5" r="0.95"/><circle cx="133.5" cy="503.5" r="0.95"/><circle cx="145.5" cy="503.5" r="0.95"/><circle cx="157.5" cy="503.5" r="0.95"/><circle cx="169.5" cy="503.5" r="0.95"/><circle cx="181.5" cy="503.5" r="0.95"/><circle cx="193.5" cy="503.5" r="0.95"/><circle cx="205.5" cy="503.5" r="0.95"/><circle cx="217.5" cy="503.5" r="0.95"/><circle cx="229.5" cy="503.5" r="0.95"/><circle cx="241.5" cy="503.5" r="0.95"/><circle cx="253.5" cy="503.5" r="0.95"/><circle cx="265.5" cy="503.5" r="0.95"/><circle cx="277.5" cy="503.5" r="0.95"/><circle cx="289.5" cy="503.5" r="0.95"/><circle cx="301.5" cy="503.5" r="0.95"/><circle cx="313.5" cy="503.5" r="0.95"/><circle cx="325.5" cy="503.5" r="0.95"/><circle cx="337.5" cy="503.5" r="0.95"/><circle cx="349.5" cy="503.5" r="0.95"/><circle cx="361.5" cy="503.5" r="0.95"/><circle cx="373.5" cy="503.5" r="0.95"/><circle cx="385.5" cy="503.5" r="0.95"/><circle cx="397.5" cy="503.5" r="0.95"/><circle cx="409.5" cy="503.5" r="0.95"/><circle cx="421.5" cy="503.5" r="0.95"/><circle cx="433.5" cy="503.5" r="0.95"/><circle cx="445.5" cy="503.5" r="0.95"/><circle cx="457.5" cy="503.5" r="0.95"/><circle cx="469.5" cy="503.5" r="0.95"/><circle cx="481.5" cy="503.5" r="0.95"/><circle cx="493.5" cy="503.5" r="0.95"/><circle cx="505.5" cy="503.5" r="0.95"/><circle cx="517.5" cy="503.5" r="0.95"/><circle cx="529.5" cy="503.5" r="0.95"/><circle cx="541.5" cy="503.5" r="0.95"/><circle cx="553.5" cy="503.5" r="0.95"/><circle cx="565.5" cy="503.5" r="0.95"/><circle cx="577.5" cy="503.5" r="0.95"/><circle cx="589.5" cy="503.5" r="0.95"/><circle cx="601.5" cy="503.5" r="0.95"/><circle cx="613.5" cy="503.5" r="0.95"/><circle cx="625.5" cy="503.5" r="0.95"/><circle cx="637.5" cy="503.5" r="0.95"/><circle cx="649.5" cy="503.5" r="0.95"/><circle cx="661.5" cy="503.5" r="0.95"/><circle cx="673.5" cy="503.5" r="0.95"/><circle cx="685.5" cy="503.5" r="0.95"/><circle cx="697.5" cy="503.5" r="0.95"/><circle cx="709.5" cy="503.5" r="0.95"/><circle cx="721.5" cy="503.5" r="0.95"/><circle cx="733.5" cy="503.5" r="0.95"/><circle cx="745.5" cy="503.5" r="0.95"/><circle cx="757.5" cy="503.5" r="0.95"/><circle cx="769.5" cy="503.5" r="0.95"/><circle cx="781.5" cy="503.5" r="0.95"/><circle cx="793.5" cy="503.5" r="0.95"/><circle cx="805.5" cy="503.5" r="0.95"/><circle cx="817.5" cy="503.5" r="0.95"/><circle cx="829.5" cy="503.5" r="0.95"/><circle cx="841.5" cy="503.5" r="0.95"/><circle cx="853.5" cy="503.5" r="0.95"/><circle cx="865.5" cy="503.5" r="0.95"/><circle cx="877.5" cy="503.5" r="0.95"/><circle cx="889.5" cy="503.5" r="0.95"/><circle cx="901.5" cy="503.5" r="0.95"/><circle cx="913.5" cy="503.5" r="0.95"/><circle cx="925.5" cy="503.5" r="0.95"/><circle cx="37.5" cy="563.5" r="0.95"/><circle cx="49.5" cy="563.5" r="0.95"/><circle cx="61.5" cy="563.5" r="0.95"/><circle cx="73.5" cy="563.5" r="0.95"/><circle cx="85.5" cy="563.5" r="0.95"/><circle cx="97.5" cy="563.5" r="0.95"/><circle cx="109.5" cy="563.5" r="0.95"/><circle cx="121.5" cy="563.5" r="0.95"/><circle cx="133.5" cy="563.5" r="0.95"/><circle cx="145.5" cy="563.5" r="0.95"/><circle cx="157.5" cy="563.5" r="0.95"/><circle cx="169.5" cy="563.5" r="0.95"/><circle cx="181.5" cy="563.5" r="0.95"/><circle cx="193.5" cy="563.5" r="0.95"/><circle cx="205.5" cy="563.5" r="0.95"/><circle cx="217.5" cy="563.5" r="0.95"/><circle cx="229.5" cy="563.5" r="0.95"/><circle cx="241.5" cy="563.5" r="0.95"/><circle cx="253.5" cy="563.5" r="0.95"/><circle cx="265.5" cy="563.5" r="0.95"/><circle cx="277.5" cy="563.5" r="0.95"/><circle cx="289.5" cy="563.5" r="0.95"/><circle cx="301.5" cy="563.5" r="0.95"/><circle cx="313.5" cy="563.5" r="0.95"/><circle cx="325.5" cy="563.5" r="0.95"/><circle cx="337.5" cy="563.5" r="0.95"/><circle cx="349.5" cy="563.5" r="0.95"/><circle cx="361.5" cy="563.5" r="0.95"/><circle cx="373.5" cy="563.5" r="0.95"/><circle cx="385.5" cy="563.5" r="0.95"/><circle cx="397.5" cy="563.5" r="0.95"/><circle cx="409.5" cy="563.5" r="0.95"/><circle cx="421.5" cy="563.5" r="0.95"/><circle cx="433.5" cy="563.5" r="0.95"/><circle cx="445.5" cy="563.5" r="0.95"/><circle cx="457.5" cy="563.5" r="0.95"/><circle cx="469.5" cy="563.5" r="0.95"/><circle cx="481.5" cy="563.5" r="0.95"/><circle cx="493.5" cy="563.5" r="0.95"/><circle cx="505.5" cy="563.5" r="0.95"/><circle cx="517.5" cy="563.5" r="0.95"/><circle cx="529.5" cy="563.5" r="0.95"/><circle cx="541.5" cy="563.5" r="0.95"/><circle cx="553.5" cy="563.5" r="0.95"/><circle cx="565.5" cy="563.5" r="0.95"/><circle cx="577.5" cy="563.5" r="0.95"/><circle cx="589.5" cy="563.5" r="0.95"/><circle cx="601.5" cy="563.5" r="0.95"/><circle cx="613.5" cy="563.5" r="0.95"/><circle cx="625.5" cy="563.5" r="0.95"/><circle cx="637.5" cy="563.5" r="0.95"/><circle cx="649.5" cy="563.5" r="0.95"/><circle cx="661.5" cy="563.5" r="0.95"/><circle cx="673.5" cy="563.5" r="0.95"/><circle cx="685.5" cy="563.5" r="0.95"/><circle cx="697.5" cy="563.5" r="0.95"/><circle cx="709.5" cy="563.5" r="0.95"/><circle cx="721.5" cy="563.5" r="0.95"/><circle cx="733.5" cy="563.5" r="0.95"/><circle cx="745.5" cy="563.5" r="0.95"/><circle cx="757.5" cy="563.5" r="0.95"/><circle cx="769.5" cy="563.5" r="0.95"/><circle cx="781.5" cy="563.5" r="0.95"/><circle cx="793.5" cy="563.5" r="0.95"/><circle cx="805.5" cy="563.5" r="0.95"/><circle cx="817.5" cy="563.5" r="0.95"/><circle cx="829.5" cy="563.5" r="0.95"/><circle cx="841.5" cy="563.5" r="0.95"/><circle cx="853.5" cy="563.5" r="0.95"/><circle cx="865.5" cy="563.5" r="0.95"/><circle cx="877.5" cy="563.5" r="0.95"/><circle cx="889.5" cy="563.5" r="0.95"/><circle cx="901.5" cy="563.5" r="0.95"/><circle cx="913.5" cy="563.5" r="0.95"/><circle cx="925.5" cy="563.5" r="0.95"/></g><g shape-rendering="crispEdges"><rect x="37" y="25" width="1" height="3" fill="#e8e8e8"/><rect x="37" y="618" width="1" height="3" fill="#e8e8e8"/><rect x="49" y="25" width="1" height="3" fill="#e8e8e8"/><rect x="49" y="618" width="1" height="3" fill="#e8e8e8"/><rect x="61" y="25" width="1" height="6" fill="#e8e8e8"/><rect x="61" y="615" width="1" height="6" fill="#e8e8e8"/><rect x="73" y="25" width="1" height="3" fill="#e8e8e8"/><rect x="73" y="618" width="1" height="3" fill="#e8e8e8"/><rect x="85" y="25" width="1" height="3" fill="#e8e8e8"/><rect x="85" y="618" width="1" height="3" fill="#e8e8e8"/><rect x="97" y="25" width="1" height="3" fill="#e8e8e8"/><rect x="97" y="618" width="1" height="3" fill="#e8e8e8"/><rect x="109" y="25" width="1" height="3" fill="#e8e8e8"/><rect x="109" y="618" width="1" height="3" fill="#e8e8e8"/><rect x="121" y="25" width="1" height="6" fill="#e8e8e8"/><rect x="121" y="615" width="1" height="6" fill="#e8e8e8"/><rect x="133" y="25" width="1" height="3" fill="#e8e8e8"/><rect x="133" y="618" width="1" height="3" fill="#e8e8e8"/><rect x="145" y="25" width="1" height="3" fill="#e8e8e8"/><rect x="145" y="618" width="1" height="3" fill="#e8e8e8"/><rect x="157" y="25" width="1" height="3" fill="#e8e8e8"/><rect x="157" y="618" width="1" height="3" fill="#e8e8e8"/><rect x="169" y="25" width="1" height="3" fill="#e8e8e8"/><rect x="169" y="618" width="1" height="3" fill="#e8e8e8"/><rect x="181" y="25" width="1" height="6" fill="#e8e8e8"/><rect x="181" y="615" width="1" height="6" fill="#e8e8e8"/><rect x="193" y="25" width="1" height="3" fill="#e8e8e8"/><rect x="193" y="618" width="1" height="3" fill="#e8e8e8"/><rect x="205" y="25" width="1" height="3" fill="#e8e8e8"/><rect x="205" y="618" width="1" height="3" fill="#e8e8e8"/><rect x="217" y="25" width="1" height="3" fill="#e8e8e8"/><rect x="217" y="618" width="1" height="3" fill="#e8e8e8"/><rect x="229" y="25" width="1" height="3" fill="#e8e8e8"/><rect x="229" y="618" width="1" height="3" fill="#e8e8e8"/><rect x="241" y="25" width="1" height="6" fill="#e8e8e8"/><rect x="241" y="615" width="1" height="6" fill="#e8e8e8"/><rect x="253" y="25" width="1" height="3" fill="#e8e8e8"/><rect x="253" y="618" width="1" height="3" fill="#e8e8e8"/><rect x="265" y="25" width="1" height="3" fill="#e8e8e8"/><rect x="265" y="618" width="1" height="3" fill="#e8e8e8"/><rect x="277" y="25" width="1" height="3" fill="#e8e8e8"/><rect x="277" y="618" width="1" height="3" fill="#e8e8e8"/><rect x="289" y="25" width="1" height="3" fill="#e8e8e8"/><rect x="289" y="618" width="1" height="3" fill="#e8e8e8"/><rect x="301" y="25" width="1" height="6" fill="#e8e8e8"/><rect x="301" y="615" width="1" height="6" fill="#e8e8e8"/><rect x="313" y="25" width="1" height="3" fill="#e8e8e8"/><rect x="313" y="618" width="1" height="3" fill="#e8e8e8"/><rect x="325" y="25" width="1" height="3" fill="#e8e8e8"/><rect x="325" y="618" width="1" height="3" fill="#e8e8e8"/><rect x="337" y="25" width="1" height="3" fill="#e8e8e8"/><rect x="337" y="618" width="1" height="3" fill="#e8e8e8"/><rect x="349" y="25" width="1" height="3" fill="#e8e8e8"/><rect x="349" y="618" width="1" height="3" fill="#e8e8e8"/><rect x="361" y="25" width="1" height="6" fill="#e8e8e8"/><rect x="361" y="615" width="1" height="6" fill="#e8e8e8"/><rect x="373" y="25" width="1" height="3" fill="#e8e8e8"/><rect x="373" y="618" width="1" height="3" fill="#e8e8e8"/><rect x="385" y="25" width="1" height="3" fill="#e8e8e8"/><rect x="385" y="618" width="1" height="3" fill="#e8e8e8"/><rect x="397" y="25" width="1" height="3" fill="#e8e8e8"/><rect x="397" y="618" width="1" height="3" fill="#e8e8e8"/><rect x="409" y="25" width="1" height="3" fill="#e8e8e8"/><rect x="409" y="618" width="1" height="3" fill="#e8e8e8"/><rect x="421" y="25" width="1" height="6" fill="#e8e8e8"/><rect x="421" y="615" width="1" height="6" fill="#e8e8e8"/><rect x="433" y="25" width="1" height="3" fill="#e8e8e8"/><rect x="433" y="618" width="1" height="3" fill="#e8e8e8"/><rect x="445" y="25" width="1" height="3" fill="#e8e8e8"/><rect x="445" y="618" width="1" height="3" fill="#e8e8e8"/><rect x="457" y="25" width="1" height="3" fill="#e8e8e8"/><rect x="457" y="618" width="1" height="3" fill="#e8e8e8"/><rect x="469" y="25" width="1" height="3" fill="#e8e8e8"/><rect x="469" y="618" width="1" height="3" fill="#e8e8e8"/><rect x="481" y="25" width="1" height="6" fill="#e8e8e8"/><rect x="481" y="615" width="1" height="6" fill="#e8e8e8"/><rect x="493" y="25" width="1" height="3" fill="#e8e8e8"/><rect x="493" y="618" width="1" height="3" fill="#e8e8e8"/><rect x="505" y="25" width="1" height="3" fill="#e8e8e8"/><rect x="505" y="618" width="1" height="3" fill="#e8e8e8"/><rect x="517" y="25" width="1" height="3" fill="#e8e8e8"/><rect x="517" y="618" width="1" height="3" fill="#e8e8e8"/><rect x="529" y="25" width="1" height="3" fill="#e8e8e8"/><rect x="529" y="618" width="1" height="3" fill="#e8e8e8"/><rect x="541" y="25" width="1" height="6" fill="#e8e8e8"/><rect x="541" y="615" width="1" height="6" fill="#e8e8e8"/><rect x="553" y="25" width="1" height="3" fill="#e8e8e8"/><rect x="553" y="618" width="1" height="3" fill="#e8e8e8"/><rect x="565" y="25" width="1" height="3" fill="#e8e8e8"/><rect x="565" y="618" width="1" height="3" fill="#e8e8e8"/><rect x="577" y="25" width="1" height="3" fill="#e8e8e8"/><rect x="577" y="618" width="1" height="3" fill="#e8e8e8"/><rect x="589" y="25" width="1" height="3" fill="#e8e8e8"/><rect x="589" y="618" width="1" height="3" fill="#e8e8e8"/><rect x="601" y="25" width="1" height="6" fill="#e8e8e8"/><rect x="601" y="615" width="1" height="6" fill="#e8e8e8"/><rect x="613" y="25" width="1" height="3" fill="#e8e8e8"/><rect x="613" y="618" width="1" height="3" fill="#e8e8e8"/><rect x="625" y="25" width="1" height="3" fill="#e8e8e8"/><rect x="625" y="618" width="1" height="3" fill="#e8e8e8"/><rect x="637" y="25" width="1" height="3" fill="#e8e8e8"/><rect x="637" y="618" width="1" height="3" fill="#e8e8e8"/><rect x="649" y="25" width="1" height="3" fill="#e8e8e8"/><rect x="649" y="618" width="1" height="3" fill="#e8e8e8"/><rect x="661" y="25" width="1" height="6" fill="#e8e8e8"/><rect x="661" y="615" width="1" height="6" fill="#e8e8e8"/><rect x="673" y="25" width="1" height="3" fill="#e8e8e8"/><rect x="673" y="618" width="1" height="3" fill="#e8e8e8"/><rect x="685" y="25" width="1" height="3" fill="#e8e8e8"/><rect x="685" y="618" width="1" height="3" fill="#e8e8e8"/><rect x="697" y="25" width="1" height="3" fill="#e8e8e8"/><rect x="697" y="618" width="1" height="3" fill="#e8e8e8"/><rect x="709" y="25" width="1" height="3" fill="#e8e8e8"/><rect x="709" y="618" width="1" height="3" fill="#e8e8e8"/><rect x="721" y="25" width="1" height="6" fill="#e8e8e8"/><rect x="721" y="615" width="1" height="6" fill="#e8e8e8"/><rect x="733" y="25" width="1" height="3" fill="#e8e8e8"/><rect x="733" y="618" width="1" height="3" fill="#e8e8e8"/><rect x="745" y="25" width="1" height="3" fill="#e8e8e8"/><rect x="745" y="618" width="1" height="3" fill="#e8e8e8"/><rect x="757" y="25" width="1" height="3" fill="#e8e8e8"/><rect x="757" y="618" width="1" height="3" fill="#e8e8e8"/><rect x="769" y="25" width="1" height="3" fill="#e8e8e8"/><rect x="769" y="618" width="1" height="3" fill="#e8e8e8"/><rect x="781" y="25" width="1" height="6" fill="#e8e8e8"/><rect x="781" y="615" width="1" height="6" fill="#e8e8e8"/><rect x="793" y="25" width="1" height="3" fill="#e8e8e8"/><rect x="793" y="618" width="1" height="3" fill="#e8e8e8"/><rect x="805" y="25" width="1" height="3" fill="#e8e8e8"/><rect x="805" y="618" width="1" height="3" fill="#e8e8e8"/><rect x="817" y="25" width="1" height="3" fill="#e8e8e8"/><rect x="817" y="618" width="1" height="3" fill="#e8e8e8"/><rect x="829" y="25" width="1" height="3" fill="#e8e8e8"/><rect x="829" y="618" width="1" height="3" fill="#e8e8e8"/><rect x="841" y="25" width="1" height="6" fill="#e8e8e8"/><rect x="841" y="615" width="1" height="6" fill="#e8e8e8"/><rect x="853" y="25" width="1" height="3" fill="#e8e8e8"/><rect x="853" y="618" width="1" height="3" fill="#e8e8e8"/><rect x="865" y="25" width="1" height="3" fill="#e8e8e8"/><rect x="865" y="618" width="1" height="3" fill="#e8e8e8"/><rect x="877" y="25" width="1" height="3" fill="#e8e8e8"/><rect x="877" y="618" width="1" height="3" fill="#e8e8e8"/><rect x="889" y="25" width="1" height="3" fill="#e8e8e8"/><rect x="889" y="618" width="1" height="3" fill="#e8e8e8"/><rect x="901" y="25" width="1" height="6" fill="#e8e8e8"/><rect x="901" y="615" width="1" height="6" fill="#e8e8e8"/><rect x="913" y="25" width="1" height="3" fill="#e8e8e8"/><rect x="913" y="618" width="1" height="3" fill="#e8e8e8"/><rect x="925" y="25" width="1" height="3" fill="#e8e8e8"/><rect x="925" y="618" width="1" height="3" fill="#e8e8e8"/><rect x="26" y="35" width="4" height="1" fill="#e8e8e8"/><rect x="930" y="35" width="4" height="1" fill="#e8e8e8"/><rect x="26" y="47" width="4" height="1" fill="#e8e8e8"/><rect x="930" y="47" width="4" height="1" fill="#e8e8e8"/><rect x="26" y="59" width="4" height="1" fill="#e8e8e8"/><rect x="930" y="59" width="4" height="1" fill="#e8e8e8"/><rect x="26" y="71" width="4" height="1" fill="#e8e8e8"/><rect x="930" y="71" width="4" height="1" fill="#e8e8e8"/><rect x="26" y="83" width="8" height="1" fill="#e8e8e8"/><rect x="926" y="83" width="8" height="1" fill="#e8e8e8"/><rect x="26" y="95" width="4" height="1" fill="#e8e8e8"/><rect x="930" y="95" width="4" height="1" fill="#e8e8e8"/><rect x="26" y="107" width="4" height="1" fill="#e8e8e8"/><rect x="930" y="107" width="4" height="1" fill="#e8e8e8"/><rect x="26" y="119" width="4" height="1" fill="#e8e8e8"/><rect x="930" y="119" width="4" height="1" fill="#e8e8e8"/><rect x="26" y="131" width="4" height="1" fill="#e8e8e8"/><rect x="930" y="131" width="4" height="1" fill="#e8e8e8"/><rect x="26" y="143" width="8" height="1" fill="#e8e8e8"/><rect x="926" y="143" width="8" height="1" fill="#e8e8e8"/><rect x="26" y="155" width="4" height="1" fill="#e8e8e8"/><rect x="930" y="155" width="4" height="1" fill="#e8e8e8"/><rect x="26" y="167" width="4" height="1" fill="#e8e8e8"/><rect x="930" y="167" width="4" height="1" fill="#e8e8e8"/><rect x="26" y="179" width="4" height="1" fill="#e8e8e8"/><rect x="930" y="179" width="4" height="1" fill="#e8e8e8"/><rect x="26" y="191" width="4" height="1" fill="#e8e8e8"/><rect x="930" y="191" width="4" height="1" fill="#e8e8e8"/><rect x="26" y="203" width="8" height="1" fill="#e8e8e8"/><rect x="926" y="203" width="8" height="1" fill="#e8e8e8"/><rect x="26" y="215" width="4" height="1" fill="#e8e8e8"/><rect x="930" y="215" width="4" height="1" fill="#e8e8e8"/><rect x="26" y="227" width="4" height="1" fill="#e8e8e8"/><rect x="930" y="227" width="4" height="1" fill="#e8e8e8"/><rect x="26" y="239" width="4" height="1" fill="#e8e8e8"/><rect x="930" y="239" width="4" height="1" fill="#e8e8e8"/><rect x="26" y="251" width="4" height="1" fill="#e8e8e8"/><rect x="930" y="251" width="4" height="1" fill="#e8e8e8"/><rect x="26" y="263" width="8" height="1" fill="#e8e8e8"/><rect x="926" y="263" width="8" height="1" fill="#e8e8e8"/><rect x="26" y="275" width="4" height="1" fill="#e8e8e8"/><rect x="930" y="275" width="4" height="1" fill="#e8e8e8"/><rect x="26" y="287" width="4" height="1" fill="#e8e8e8"/><rect x="930" y="287" width="4" height="1" fill="#e8e8e8"/><rect x="26" y="299" width="4" height="1" fill="#e8e8e8"/><rect x="930" y="299" width="4" height="1" fill="#e8e8e8"/><rect x="26" y="311" width="4" height="1" fill="#e8e8e8"/><rect x="930" y="311" width="4" height="1" fill="#e8e8e8"/><rect x="26" y="323" width="8" height="1" fill="#e8e8e8"/><rect x="926" y="323" width="8" height="1" fill="#e8e8e8"/><rect x="26" y="335" width="4" height="1" fill="#e8e8e8"/><rect x="930" y="335" width="4" height="1" fill="#e8e8e8"/><rect x="26" y="347" width="4" height="1" fill="#e8e8e8"/><rect x="930" y="347" width="4" height="1" fill="#e8e8e8"/><rect x="26" y="359" width="4" height="1" fill="#e8e8e8"/><rect x="930" y="359" width="4" height="1" fill="#e8e8e8"/><rect x="26" y="371" width="4" height="1" fill="#e8e8e8"/><rect x="930" y="371" width="4" height="1" fill="#e8e8e8"/><rect x="26" y="383" width="8" height="1" fill="#e8e8e8"/><rect x="926" y="383" width="8" height="1" fill="#e8e8e8"/><rect x="26" y="395" width="4" height="1" fill="#e8e8e8"/><rect x="930" y="395" width="4" height="1" fill="#e8e8e8"/><rect x="26" y="407" width="4" height="1" fill="#e8e8e8"/><rect x="930" y="407" width="4" height="1" fill="#e8e8e8"/><rect x="26" y="419" width="4" height="1" fill="#e8e8e8"/><rect x="930" y="419" width="4" height="1" fill="#e8e8e8"/><rect x="26" y="431" width="4" height="1" fill="#e8e8e8"/><rect x="930" y="431" width="4" height="1" fill="#e8e8e8"/><rect x="26" y="443" width="8" height="1" fill="#e8e8e8"/><rect x="926" y="443" width="8" height="1" fill="#e8e8e8"/><rect x="26" y="455" width="4" height="1" fill="#e8e8e8"/><rect x="930" y="455" width="4" height="1" fill="#e8e8e8"/><rect x="26" y="467" width="4" height="1" fill="#e8e8e8"/><rect x="930" y="467" width="4" height="1" fill="#e8e8e8"/><rect x="26" y="479" width="4" height="1" fill="#e8e8e8"/><rect x="930" y="479" width="4" height="1" fill="#e8e8e8"/><rect x="26" y="491" width="4" height="1" fill="#e8e8e8"/><rect x="930" y="491" width="4" height="1" fill="#e8e8e8"/><rect x="26" y="503" width="8" height="1" fill="#e8e8e8"/><rect x="926" y="503" width="8" height="1" fill="#e8e8e8"/><rect x="26" y="515" width="4" height="1" fill="#e8e8e8"/><rect x="930" y="515" width="4" height="1" fill="#e8e8e8"/><rect x="26" y="527" width="4" height="1" fill="#e8e8e8"/><rect x="930" y="527" width="4" height="1" fill="#e8e8e8"/><rect x="26" y="539" width="4" height="1" fill="#e8e8e8"/><rect x="930" y="539" width="4" height="1" fill="#e8e8e8"/><rect x="26" y="551" width="4" height="1" fill="#e8e8e8"/><rect x="930" y="551" width="4" height="1" fill="#e8e8e8"/><rect x="26" y="563" width="8" height="1" fill="#e8e8e8"/><rect x="926" y="563" width="8" height="1" fill="#e8e8e8"/><rect x="26" y="575" width="4" height="1" fill="#e8e8e8"/><rect x="930" y="575" width="4" height="1" fill="#e8e8e8"/><rect x="26" y="587" width="4" height="1" fill="#e8e8e8"/><rect x="930" y="587" width="4" height="1" fill="#e8e8e8"/><rect x="26" y="599" width="4" height="1" fill="#e8e8e8"/><rect x="930" y="599" width="4" height="1" fill="#e8e8e8"/><rect x="26" y="611" width="4" height="1" fill="#e8e8e8"/><rect x="930" y="611" width="4" height="1" fill="#e8e8e8"/><rect x="480" y="35" width="3" height="1" fill="#f4f4f4"/><rect x="480" y="47" width="3" height="1" fill="#f4f4f4"/><rect x="480" y="59" width="3" height="1" fill="#f4f4f4"/><rect x="480" y="71" width="3" height="1" fill="#f4f4f4"/><rect x="480" y="83" width="3" height="1" fill="#f4f4f4"/><rect x="480" y="95" width="3" height="1" fill="#f4f4f4"/><rect x="480" y="107" width="3" height="1" fill="#f4f4f4"/><rect x="480" y="119" width="3" height="1" fill="#f4f4f4"/><rect x="480" y="131" width="3" height="1" fill="#f4f4f4"/><rect x="480" y="143" width="3" height="1" fill="#f4f4f4"/><rect x="480" y="155" width="3" height="1" fill="#f4f4f4"/><rect x="480" y="167" width="3" height="1" fill="#f4f4f4"/><rect x="480" y="179" width="3" height="1" fill="#f4f4f4"/><rect x="480" y="191" width="3" height="1" fill="#f4f4f4"/><rect x="480" y="203" width="3" height="1" fill="#f4f4f4"/><rect x="480" y="215" width="3" height="1" fill="#f4f4f4"/><rect x="480" y="227" width="3" height="1" fill="#f4f4f4"/><rect x="480" y="239" width="3" height="1" fill="#f4f4f4"/><rect x="480" y="251" width="3" height="1" fill="#f4f4f4"/><rect x="480" y="263" width="3" height="1" fill="#f4f4f4"/><rect x="480" y="275" width="3" height="1" fill="#f4f4f4"/><rect x="480" y="287" width="3" height="1" fill="#f4f4f4"/><rect x="480" y="299" width="3" height="1" fill="#f4f4f4"/><rect x="480" y="311" width="3" height="1" fill="#f4f4f4"/><rect x="480" y="323" width="3" height="1" fill="#f4f4f4"/><rect x="480" y="335" width="3" height="1" fill="#f4f4f4"/><rect x="480" y="347" width="3" height="1" fill="#f4f4f4"/><rect x="480" y="359" width="3" height="1" fill="#f4f4f4"/><rect x="480" y="371" width="3" height="1" fill="#f4f4f4"/><rect x="480" y="383" width="3" height="1" fill="#f4f4f4"/><rect x="480" y="395" width="3" height="1" fill="#f4f4f4"/><rect x="480" y="407" width="3" height="1" fill="#f4f4f4"/><rect x="480" y="419" width="3" height="1" fill="#f4f4f4"/><rect x="480" y="431" width="3" height="1" fill="#f4f4f4"/><rect x="480" y="443" width="3" height="1" fill="#f4f4f4"/><rect x="480" y="455" width="3" height="1" fill="#f4f4f4"/><rect x="480" y="467" width="3" height="1" fill="#f4f4f4"/><rect x="480" y="479" width="3" height="1" fill="#f4f4f4"/><rect x="480" y="491" width="3" height="1" fill="#f4f4f4"/><rect x="480" y="503" width="3" height="1" fill="#f4f4f4"/><rect x="480" y="515" width="3" height="1" fill="#f4f4f4"/><rect x="480" y="527" width="3" height="1" fill="#f4f4f4"/><rect x="480" y="539" width="3" height="1" fill="#f4f4f4"/><rect x="480" y="551" width="3" height="1" fill="#f4f4f4"/><rect x="480" y="563" width="3" height="1" fill="#f4f4f4"/><rect x="480" y="575" width="3" height="1" fill="#f4f4f4"/><rect x="480" y="587" width="3" height="1" fill="#f4f4f4"/><rect x="480" y="599" width="3" height="1" fill="#f4f4f4"/><rect x="480" y="611" width="3" height="1" fill="#f4f4f4"/><rect x="37" y="322" width="1" height="3" fill="#f4f4f4"/><rect x="49" y="322" width="1" height="3" fill="#f4f4f4"/><rect x="61" y="322" width="1" height="3" fill="#f4f4f4"/><rect x="73" y="322" width="1" height="3" fill="#f4f4f4"/><rect x="85" y="322" width="1" height="3" fill="#f4f4f4"/><rect x="97" y="322" width="1" height="3" fill="#f4f4f4"/><rect x="109" y="322" width="1" height="3" fill="#f4f4f4"/><rect x="121" y="322" width="1" height="3" fill="#f4f4f4"/><rect x="133" y="322" width="1" height="3" fill="#f4f4f4"/><rect x="145" y="322" width="1" height="3" fill="#f4f4f4"/><rect x="157" y="322" width="1" height="3" fill="#f4f4f4"/><rect x="169" y="322" width="1" height="3" fill="#f4f4f4"/><rect x="181" y="322" width="1" height="3" fill="#f4f4f4"/><rect x="193" y="322" width="1" height="3" fill="#f4f4f4"/><rect x="205" y="322" width="1" height="3" fill="#f4f4f4"/><rect x="217" y="322" width="1" height="3" fill="#f4f4f4"/><rect x="229" y="322" width="1" height="3" fill="#f4f4f4"/><rect x="241" y="322" width="1" height="3" fill="#f4f4f4"/><rect x="253" y="322" width="1" height="3" fill="#f4f4f4"/><rect x="265" y="322" width="1" height="3" fill="#f4f4f4"/><rect x="277" y="322" width="1" height="3" fill="#f4f4f4"/><rect x="289" y="322" width="1" height="3" fill="#f4f4f4"/><rect x="301" y="322" width="1" height="3" fill="#f4f4f4"/><rect x="313" y="322" width="1" height="3" fill="#f4f4f4"/><rect x="325" y="322" width="1" height="3" fill="#f4f4f4"/><rect x="337" y="322" width="1" height="3" fill="#f4f4f4"/><rect x="349" y="322" width="1" height="3" fill="#f4f4f4"/><rect x="361" y="322" width="1" height="3" fill="#f4f4f4"/><rect x="373" y="322" width="1" height="3" fill="#f4f4f4"/><rect x="385" y="322" width="1" height="3" fill="#f4f4f4"/><rect x="397" y="322" width="1" height="3" fill="#f4f4f4"/><rect x="409" y="322" width="1" height="3" fill="#f4f4f4"/><rect x="421" y="322" width="1" height="3" fill="#f4f4f4"/><rect x="433" y="322" width="1" height="3" fill="#f4f4f4"/><rect x="445" y="322" width="1" height="3" fill="#f4f4f4"/><rect x="457" y="322" width="1" height="3" fill="#f4f4f4"/><rect x="469" y="322" width="1" height="3" fill="#f4f4f4"/><rect x="481" y="322" width="1" height="3" fill="#f4f4f4"/><rect x="493" y="322" width="1" height="3" fill="#f4f4f4"/><rect x="505" y="322" width="1" height="3" fill="#f4f4f4"/><rect x="517" y="322" width="1" height="3" fill="#f4f4f4"/><rect x="529" y="322" width="1" height="3" fill="#f4f4f4"/><rect x="541" y="322" width="1" height="3" fill="#f4f4f4"/><rect x="553" y="322" width="1" height="3" fill="#f4f4f4"/><rect x="565" y="322" width="1" height="3" fill="#f4f4f4"/><rect x="577" y="322" width="1" height="3" fill="#f4f4f4"/><rect x="589" y="322" width="1" height="3" fill="#f4f4f4"/><rect x="601" y="322" width="1" height="3" fill="#f4f4f4"/><rect x="613" y="322" width="1" height="3" fill="#f4f4f4"/><rect x="625" y="322" width="1" height="3" fill="#f4f4f4"/><rect x="637" y="322" width="1" height="3" fill="#f4f4f4"/><rect x="649" y="322" width="1" height="3" fill="#f4f4f4"/><rect x="661" y="322" width="1" height="3" fill="#f4f4f4"/><rect x="673" y="322" width="1" height="3" fill="#f4f4f4"/><rect x="685" y="322" width="1" height="3" fill="#f4f4f4"/><rect x="697" y="322" width="1" height="3" fill="#f4f4f4"/><rect x="709" y="322" width="1" height="3" fill="#f4f4f4"/><rect x="721" y="322" width="1" height="3" fill="#f4f4f4"/><rect x="733" y="322" width="1" height="3" fill="#f4f4f4"/><rect x="745" y="322" width="1" height="3" fill="#f4f4f4"/><rect x="757" y="322" width="1" height="3" fill="#f4f4f4"/><rect x="769" y="322" width="1" height="3" fill="#f4f4f4"/><rect x="781" y="322" width="1" height="3" fill="#f4f4f4"/><rect x="793" y="322" width="1" height="3" fill="#f4f4f4"/><rect x="805" y="322" width="1" height="3" fill="#f4f4f4"/><rect x="817" y="322" width="1" height="3" fill="#f4f4f4"/><rect x="829" y="322" width="1" height="3" fill="#f4f4f4"/><rect x="841" y="322" width="1" height="3" fill="#f4f4f4"/><rect x="853" y="322" width="1" height="3" fill="#f4f4f4"/><rect x="865" y="322" width="1" height="3" fill="#f4f4f4"/><rect x="877" y="322" width="1" height="3" fill="#f4f4f4"/><rect x="889" y="322" width="1" height="3" fill="#f4f4f4"/><rect x="901" y="322" width="1" height="3" fill="#f4f4f4"/><rect x="913" y="322" width="1" height="3" fill="#f4f4f4"/><rect x="925" y="322" width="1" height="3" fill="#f4f4f4"/><rect x="178" y="323" width="9" height="1" fill="#f4f4f4"/><rect x="182" y="319" width="1" height="9" fill="#f4f4f4"/><rect x="778" y="323" width="9" height="1" fill="#f4f4f4"/><rect x="782" y="319" width="1" height="9" fill="#f4f4f4"/></g><path d="M26,323.5 L72.5,323.5 L73,308 L75.5,296 L77.3,289 L79,286 L81.5,292 L89,277.5 L96.2,260.6 L106.2,240.6 L115.1,225 L120.7,220 L128.4,217.2 L137.3,215.6 L145.1,214.5 L170,214.5 L172,217.5 L187,217.5 L193,221 L206.7,234 L223.3,249 L235.8,257.3 L248.3,262.5 L265,267 L268,267.5 L311.9,267.5 L316.5,277 L321.2,286.5 L344,286.5 L344,288.5 L455,288.5 L455,286.5 L480,286.5 L480,284.3 L632,284.3 L632,286.5 L655,286.5 L655,288.5 L905,288.5" fill="none" stroke="#f0f000" stroke-width="2.6" stroke-linejoin="round" shape-rendering="geometricPrecision"/><rect x="904.2" y="287.5" width="1.7" height="37" fill="#f0f000" shape-rendering="geometricPrecision"/><path d="M905,323.5 H933" stroke="#f0f000" stroke-width="2.4" shape-rendering="geometricPrecision"/><path d="M137.3,215.6 L145.1,214.5 L170,214.5 L172,217.5 L187,217.5 L193,221 L206.7,234 L223.3,249 L235.8,257.3 L248.3,262.5 L265,267 L268,267.5 L311.9,267.5" fill="none" stroke="#f0f000" stroke-width="4" stroke-linejoin="round" shape-rendering="geometricPrecision"/><g shape-rendering="geometricPrecision"><rect x="26" y="322.20" width="46" height="2.6" fill="#f0f000"/><rect x="29" y="324.8" width="1" height="1" fill="#f0f000" opacity="0.75"/><rect x="31" y="324.8" width="1" height="3" fill="#f0f000" opacity="0.75"/><rect x="32" y="320.2" width="1" height="2" fill="#f0f000" opacity="0.75"/><rect x="33" y="320.2" width="1" height="2" fill="#f0f000" opacity="0.75"/><rect x="34" y="324.8" width="1" height="1.5" fill="#f0f000" opacity="0.75"/><rect x="37" y="324.8" width="1" height="1" fill="#f0f000" opacity="0.75"/><rect x="39" y="324.8" width="1" height="2" fill="#f0f000" opacity="0.75"/><rect x="45" y="324.8" width="1" height="1.5" fill="#f0f000" opacity="0.75"/><rect x="48" y="320.7" width="1" height="1.5" fill="#f0f000" opacity="0.75"/><rect x="56" y="324.8" width="1" height="1" fill="#f0f000" opacity="0.75"/><rect x="63" y="320.2" width="1" height="2" fill="#f0f000" opacity="0.75"/><rect x="64" y="321.2" width="1" height="1" fill="#f0f000" opacity="0.75"/><rect x="66" y="324.8" width="1" height="2" fill="#f0f000" opacity="0.75"/><rect x="321" y="284.60" width="23" height="3.8" fill="#f0f000"/><rect x="323" y="282.6" width="1" height="2" fill="#f0f000" opacity="0.75"/><rect x="326" y="288.4" width="1" height="3" fill="#f0f000" opacity="0.75"/><rect x="332" y="283.1" width="1" height="1.5" fill="#f0f000" opacity="0.75"/><rect x="335" y="283.1" width="1" height="1.5" fill="#f0f000" opacity="0.75"/><rect x="339" y="282.6" width="1" height="2" fill="#f0f000" opacity="0.75"/><rect x="344" y="286.60" width="111" height="3.8" fill="#f0f000"/><rect x="351" y="285.1" width="1" height="1.5" fill="#f0f000" opacity="0.75"/><rect x="353" y="290.4" width="1" height="1.5" fill="#f0f000" opacity="0.75"/><rect x="355" y="284.6" width="1" height="2" fill="#f0f000" opacity="0.75"/><rect x="358" y="290.4" width="1" height="3" fill="#f0f000" opacity="0.75"/><rect x="370" y="290.4" width="1" height="2" fill="#f0f000" opacity="0.75"/><rect x="371" y="285.6" width="1" height="1" fill="#f0f000" opacity="0.75"/><rect x="372" y="290.4" width="1" height="3" fill="#f0f000" opacity="0.75"/><rect x="373" y="285.6" width="1" height="1" fill="#f0f000" opacity="0.75"/><rect x="374" y="284.6" width="1" height="2" fill="#f0f000" opacity="0.75"/><rect x="375" y="284.6" width="1" height="2" fill="#f0f000" opacity="0.75"/><rect x="378" y="284.6" width="1" height="2" fill="#f0f000" opacity="0.75"/><rect x="381" y="290.4" width="1" height="2" fill="#f0f000" opacity="0.75"/><rect x="385" y="290.4" width="1" height="2" fill="#f0f000" opacity="0.75"/><rect x="386" y="290.4" width="1" height="1" fill="#f0f000" opacity="0.75"/><rect x="390" y="290.4" width="1" height="3" fill="#f0f000" opacity="0.75"/><rect x="392" y="290.4" width="1" height="3" fill="#f0f000" opacity="0.75"/><rect x="399" y="284.6" width="1" height="2" fill="#f0f000" opacity="0.75"/><rect x="404" y="284.6" width="1" height="2" fill="#f0f000" opacity="0.75"/><rect x="406" y="290.4" width="1" height="2" fill="#f0f000" opacity="0.75"/><rect x="414" y="283.6" width="1" height="3" fill="#f0f000" opacity="0.75"/><rect x="417" y="290.4" width="1" height="2" fill="#f0f000" opacity="0.75"/><rect x="419" y="290.4" width="1" height="2" fill="#f0f000" opacity="0.75"/><rect x="423" y="290.4" width="1" height="2" fill="#f0f000" opacity="0.75"/><rect x="424" y="290.4" width="1" height="2" fill="#f0f000" opacity="0.75"/><rect x="427" y="285.1" width="1" height="1.5" fill="#f0f000" opacity="0.75"/><rect x="428" y="290.4" width="1" height="2" fill="#f0f000" opacity="0.75"/><rect x="430" y="290.4" width="1" height="2" fill="#f0f000" opacity="0.75"/><rect x="434" y="285.6" width="1" height="1" fill="#f0f000" opacity="0.75"/><rect x="440" y="284.6" width="1" height="2" fill="#f0f000" opacity="0.75"/><rect x="446" y="290.4" width="1" height="2" fill="#f0f000" opacity="0.75"/><rect x="452" y="283.6" width="1" height="3" fill="#f0f000" opacity="0.75"/><rect x="453" y="285.1" width="1" height="1.5" fill="#f0f000" opacity="0.75"/><rect x="455" y="284.60" width="25" height="3.8" fill="#f0f000"/><rect x="459" y="281.6" width="1" height="3" fill="#f0f000" opacity="0.75"/><rect x="466" y="288.4" width="1" height="1.5" fill="#f0f000" opacity="0.75"/><rect x="467" y="283.6" width="1" height="1" fill="#f0f000" opacity="0.75"/><rect x="480" y="282.40" width="152" height="3.8" fill="#f0f000"/><rect x="491" y="280.4" width="1" height="2" fill="#f0f000" opacity="0.75"/><rect x="495" y="281.4" width="1" height="1" fill="#f0f000" opacity="0.75"/><rect x="497" y="286.2" width="1" height="2" fill="#f0f000" opacity="0.75"/><rect x="498" y="286.2" width="1" height="2" fill="#f0f000" opacity="0.75"/><rect x="499" y="286.2" width="1" height="2" fill="#f0f000" opacity="0.75"/><rect x="501" y="286.2" width="1" height="1.5" fill="#f0f000" opacity="0.75"/><rect x="502" y="279.4" width="1" height="3" fill="#f0f000" opacity="0.75"/><rect x="506" y="280.4" width="1" height="2" fill="#f0f000" opacity="0.75"/><rect x="509" y="279.4" width="1" height="3" fill="#f0f000" opacity="0.75"/><rect x="512" y="286.2" width="1" height="1.5" fill="#f0f000" opacity="0.75"/><rect x="514" y="281.4" width="1" height="1" fill="#f0f000" opacity="0.75"/><rect x="516" y="286.2" width="1" height="2" fill="#f0f000" opacity="0.75"/><rect x="527" y="286.2" width="1" height="2" fill="#f0f000" opacity="0.75"/><rect x="531" y="286.2" width="1" height="1" fill="#f0f000" opacity="0.75"/><rect x="533" y="279.4" width="1" height="3" fill="#f0f000" opacity="0.75"/><rect x="537" y="286.2" width="1" height="1" fill="#f0f000" opacity="0.75"/><rect x="540" y="286.2" width="1" height="2" fill="#f0f000" opacity="0.75"/><rect x="542" y="280.9" width="1" height="1.5" fill="#f0f000" opacity="0.75"/><rect x="546" y="279.4" width="1" height="3" fill="#f0f000" opacity="0.75"/><rect x="548" y="280.4" width="1" height="2" fill="#f0f000" opacity="0.75"/><rect x="549" y="286.2" width="1" height="2" fill="#f0f000" opacity="0.75"/><rect x="555" y="280.9" width="1" height="1.5" fill="#f0f000" opacity="0.75"/><rect x="561" y="281.4" width="1" height="1" fill="#f0f000" opacity="0.75"/><rect x="565" y="286.2" width="1" height="2" fill="#f0f000" opacity="0.75"/><rect x="572" y="280.4" width="1" height="2" fill="#f0f000" opacity="0.75"/><rect x="577" y="286.2" width="1" height="1.5" fill="#f0f000" opacity="0.75"/><rect x="579" y="280.4" width="1" height="2" fill="#f0f000" opacity="0.75"/><rect x="584" y="286.2" width="1" height="1.5" fill="#f0f000" opacity="0.75"/><rect x="586" y="280.4" width="1" height="2" fill="#f0f000" opacity="0.75"/><rect x="588" y="286.2" width="1" height="1.5" fill="#f0f000" opacity="0.75"/><rect x="595" y="286.2" width="1" height="1.5" fill="#f0f000" opacity="0.75"/><rect x="596" y="286.2" width="1" height="3" fill="#f0f000" opacity="0.75"/><rect x="600" y="286.2" width="1" height="3" fill="#f0f000" opacity="0.75"/><rect x="603" y="286.2" width="1" height="1.5" fill="#f0f000" opacity="0.75"/><rect x="604" y="280.4" width="1" height="2" fill="#f0f000" opacity="0.75"/><rect x="608" y="279.4" width="1" height="3" fill="#f0f000" opacity="0.75"/><rect x="611" y="286.2" width="1" height="3" fill="#f0f000" opacity="0.75"/><rect x="613" y="286.2" width="1" height="2" fill="#f0f000" opacity="0.75"/><rect x="615" y="280.9" width="1" height="1.5" fill="#f0f000" opacity="0.75"/><rect x="620" y="286.2" width="1" height="2" fill="#f0f000" opacity="0.75"/><rect x="624" y="280.4" width="1" height="2" fill="#f0f000" opacity="0.75"/><rect x="628" y="280.4" width="1" height="2" fill="#f0f000" opacity="0.75"/><rect x="632" y="284.60" width="23" height="3.8" fill="#f0f000"/><rect x="640" y="288.4" width="1" height="1.5" fill="#f0f000" opacity="0.75"/><rect x="642" y="282.6" width="1" height="2" fill="#f0f000" opacity="0.75"/><rect x="648" y="288.4" width="1" height="1.5" fill="#f0f000" opacity="0.75"/><rect x="649" y="281.6" width="1" height="3" fill="#f0f000" opacity="0.75"/><rect x="655" y="286.60" width="250" height="3.8" fill="#f0f000"/><rect x="658" y="284.6" width="1" height="2" fill="#f0f000" opacity="0.75"/><rect x="661" y="284.6" width="1" height="2" fill="#f0f000" opacity="0.75"/><rect x="667" y="284.6" width="1" height="2" fill="#f0f000" opacity="0.75"/><rect x="670" y="290.4" width="1" height="1" fill="#f0f000" opacity="0.75"/><rect x="680" y="284.6" width="1" height="2" fill="#f0f000" opacity="0.75"/><rect x="682" y="290.4" width="1" height="2" fill="#f0f000" opacity="0.75"/><rect x="684" y="284.6" width="1" height="2" fill="#f0f000" opacity="0.75"/><rect x="692" y="290.4" width="1" height="2" fill="#f0f000" opacity="0.75"/><rect x="694" y="290.4" width="1" height="2" fill="#f0f000" opacity="0.75"/><rect x="695" y="290.4" width="1" height="1.5" fill="#f0f000" opacity="0.75"/><rect x="696" y="284.6" width="1" height="2" fill="#f0f000" opacity="0.75"/><rect x="705" y="285.1" width="1" height="1.5" fill="#f0f000" opacity="0.75"/><rect x="715" y="290.4" width="1" height="2" fill="#f0f000" opacity="0.75"/><rect x="726" y="284.6" width="1" height="2" fill="#f0f000" opacity="0.75"/><rect x="727" y="290.4" width="1" height="1.5" fill="#f0f000" opacity="0.75"/><rect x="728" y="290.4" width="1" height="2" fill="#f0f000" opacity="0.75"/><rect x="734" y="284.6" width="1" height="2" fill="#f0f000" opacity="0.75"/><rect x="737" y="290.4" width="1" height="3" fill="#f0f000" opacity="0.75"/><rect x="741" y="283.6" width="1" height="3" fill="#f0f000" opacity="0.75"/><rect x="743" y="290.4" width="1" height="2" fill="#f0f000" opacity="0.75"/><rect x="744" y="290.4" width="1" height="1" fill="#f0f000" opacity="0.75"/><rect x="750" y="284.6" width="1" height="2" fill="#f0f000" opacity="0.75"/><rect x="752" y="283.6" width="1" height="3" fill="#f0f000" opacity="0.75"/><rect x="754" y="283.6" width="1" height="3" fill="#f0f000" opacity="0.75"/><rect x="755" y="290.4" width="1" height="2" fill="#f0f000" opacity="0.75"/><rect x="762" y="284.6" width="1" height="2" fill="#f0f000" opacity="0.75"/><rect x="763" y="284.6" width="1" height="2" fill="#f0f000" opacity="0.75"/><rect x="764" y="284.6" width="1" height="2" fill="#f0f000" opacity="0.75"/><rect x="767" y="284.6" width="1" height="2" fill="#f0f000" opacity="0.75"/><rect x="770" y="283.6" width="1" height="3" fill="#f0f000" opacity="0.75"/><rect x="771" y="285.1" width="1" height="1.5" fill="#f0f000" opacity="0.75"/><rect x="780" y="284.6" width="1" height="2" fill="#f0f000" opacity="0.75"/><rect x="782" y="290.4" width="1" height="2" fill="#f0f000" opacity="0.75"/><rect x="783" y="283.6" width="1" height="3" fill="#f0f000" opacity="0.75"/><rect x="784" y="285.6" width="1" height="1" fill="#f0f000" opacity="0.75"/><rect x="785" y="284.6" width="1" height="2" fill="#f0f000" opacity="0.75"/><rect x="790" y="290.4" width="1" height="2" fill="#f0f000" opacity="0.75"/><rect x="791" y="290.4" width="1" height="2" fill="#f0f000" opacity="0.75"/><rect x="795" y="285.6" width="1" height="1" fill="#f0f000" opacity="0.75"/><rect x="798" y="290.4" width="1" height="1.5" fill="#f0f000" opacity="0.75"/><rect x="803" y="290.4" width="1" height="1.5" fill="#f0f000" opacity="0.75"/><rect x="806" y="284.6" width="1" height="2" fill="#f0f000" opacity="0.75"/><rect x="807" y="284.6" width="1" height="2" fill="#f0f000" opacity="0.75"/><rect x="808" y="285.6" width="1" height="1" fill="#f0f000" opacity="0.75"/><rect x="810" y="285.6" width="1" height="1" fill="#f0f000" opacity="0.75"/><rect x="820" y="290.4" width="1" height="1" fill="#f0f000" opacity="0.75"/><rect x="821" y="284.6" width="1" height="2" fill="#f0f000" opacity="0.75"/><rect x="828" y="285.6" width="1" height="1" fill="#f0f000" opacity="0.75"/><rect x="838" y="285.1" width="1" height="1.5" fill="#f0f000" opacity="0.75"/><rect x="840" y="283.6" width="1" height="3" fill="#f0f000" opacity="0.75"/><rect x="842" y="285.6" width="1" height="1" fill="#f0f000" opacity="0.75"/><rect x="845" y="284.6" width="1" height="2" fill="#f0f000" opacity="0.75"/><rect x="848" y="284.6" width="1" height="2" fill="#f0f000" opacity="0.75"/><rect x="854" y="290.4" width="1" height="2" fill="#f0f000" opacity="0.75"/><rect x="860" y="284.6" width="1" height="2" fill="#f0f000" opacity="0.75"/><rect x="871" y="285.1" width="1" height="1.5" fill="#f0f000" opacity="0.75"/><rect x="874" y="285.6" width="1" height="1" fill="#f0f000" opacity="0.75"/><rect x="875" y="290.4" width="1" height="3" fill="#f0f000" opacity="0.75"/><rect x="876" y="283.6" width="1" height="3" fill="#f0f000" opacity="0.75"/><rect x="882" y="290.4" width="1" height="3" fill="#f0f000" opacity="0.75"/><rect x="884" y="285.6" width="1" height="1" fill="#f0f000" opacity="0.75"/><rect x="885" y="283.6" width="1" height="3" fill="#f0f000" opacity="0.75"/><rect x="893" y="284.6" width="1" height="2" fill="#f0f000" opacity="0.75"/><rect x="895" y="284.6" width="1" height="2" fill="#f0f000" opacity="0.75"/><rect x="897" y="290.4" width="1" height="1.5" fill="#f0f000" opacity="0.75"/><rect x="903" y="290.4" width="1" height="2" fill="#f0f000" opacity="0.75"/><rect x="905" y="322.20" width="28" height="2.6" fill="#f0f000"/><rect x="908" y="324.8" width="1" height="2" fill="#f0f000" opacity="0.75"/><rect x="914" y="321.2" width="1" height="1" fill="#f0f000" opacity="0.75"/><rect x="918" y="319.2" width="1" height="3" fill="#f0f000" opacity="0.75"/><rect x="919" y="324.8" width="1" height="2" fill="#f0f000" opacity="0.75"/><rect x="920" y="324.8" width="1" height="2" fill="#f0f000" opacity="0.75"/><rect x="922" y="320.7" width="1" height="1.5" fill="#f0f000" opacity="0.75"/><rect x="925" y="320.7" width="1" height="1.5" fill="#f0f000" opacity="0.75"/><rect x="928" y="324.8" width="1" height="2" fill="#f0f000" opacity="0.75"/><rect x="929" y="324.8" width="1" height="2" fill="#f0f000" opacity="0.75"/><rect x="930" y="324.8" width="1" height="1.5" fill="#f0f000" opacity="0.75"/><rect x="266" y="265.50" width="46" height="4" fill="#f0f000"/><rect x="271" y="262.5" width="1" height="3" fill="#f0f000" opacity="0.75"/><rect x="272" y="262.5" width="1" height="3" fill="#f0f000" opacity="0.75"/><rect x="273" y="264.0" width="1" height="1.5" fill="#f0f000" opacity="0.75"/><rect x="277" y="269.5" width="1" height="1" fill="#f0f000" opacity="0.75"/><rect x="290" y="263.5" width="1" height="2" fill="#f0f000" opacity="0.75"/><rect x="298" y="263.5" width="1" height="2" fill="#f0f000" opacity="0.75"/><rect x="299" y="262.5" width="1" height="3" fill="#f0f000" opacity="0.75"/><rect x="301" y="263.5" width="1" height="2" fill="#f0f000" opacity="0.75"/><rect x="304" y="269.5" width="1" height="2" fill="#f0f000" opacity="0.75"/><rect x="307" y="262.5" width="1" height="3" fill="#f0f000" opacity="0.75"/><rect x="310" y="269.5" width="1" height="2" fill="#f0f000" opacity="0.75"/><rect x="145" y="212.50" width="25" height="4" fill="#f0f000"/><rect x="167" y="210.5" width="1" height="2" fill="#f0f000" opacity="0.75"/><rect x="172" y="215.50" width="15" height="4" fill="#f0f000"/><rect x="175" y="219.5" width="1" height="1" fill="#f0f000" opacity="0.75"/><rect x="177" y="219.5" width="1" height="2" fill="#f0f000" opacity="0.75"/><rect x="181" y="219.5" width="1" height="2" fill="#f0f000" opacity="0.75"/></g><path d="M0.5,313.5 H16 L22,323.5 L16,333.5 H0.5 Z" fill="#000" stroke="#e8e820" stroke-width="1.5"/><text transform="translate(9.5,330.5) scale(1,1.0)" fill="#e8e820" font-size="18" class="sans" text-anchor="middle">2</text><text transform="translate(29,18.8) scale(1,0.9)" fill="#0a1e58" font-size="20" stroke="#0a1e58" stroke-width="0.4">AKTAKOM</text><rect x="144" y="1.5" width="96" height="21" rx="10.5" fill="#f00a0a"/><text transform="translate(168,17.5) scale(1,0.9)" fill="#500000" font-size="20" stroke="#500000" stroke-width="0.4">Stop</text><rect x="300" y="1" width="359" height="22" rx="11" fill="#000"/><rect x="312" y="10.2" width="337" height="1.6" fill="#d0d048"/><path d="M354,22.5 V2.5 H357" fill="none" stroke="#c8c8c8" stroke-width="2"/><path d="M606,22.5 V2.5 H603" fill="none" stroke="#c8c8c8" stroke-width="2"/><rect x="436" y="2" width="7" height="3" fill="#d020d0"/><rect x="439" y="5" width="2" height="3" fill="#e0a0e0"/><rect x="672" y="1" width="130" height="22" rx="11" fill="#000"/><path d="M679.5,4.6 H689.5 Q691.8,4.6 691.8,7 V15.5 Q691.8,17 690,18 L685.5,20.3 Q684.5,20.8 683.5,20.3 L679,18 Q677.2,17 677.2,15.5 V7 Q677.2,4.6 679.5,4.6 Z" fill="#000" stroke="#8a2ad8" stroke-width="1.7"/><path d="M679.8,9 H689.2 M684.5,9 V16.5" stroke="#c038f0" stroke-width="2"/><text transform="translate(695,18.5) scale(1,0.9)" fill="#f4f4f4" font-size="20" stroke="#000" stroke-width="0.25" >960.0ms</text><rect x="821" y="1" width="70" height="22" rx="11" fill="#000"/><text transform="translate(830,18) scale(1,0.9)" fill="#f4f4f4" font-size="20" stroke="#000" stroke-width="0.25" >6:52</text><g shape-rendering="geometricPrecision"><path d="M908.5,12.5 L918,8.5 L921.5,14.5 L912,19 Z" fill="#34466a" stroke="#1a48a8" stroke-width="1.3"/><path d="M911,17.6 L920.2,13.6" stroke="#e8b8c8" stroke-width="1.3"/><path d="M909.5,13 L911.5,17.5" stroke="#a8d0e0" stroke-width="1.1"/><path d="M907,7.5 Q908,3.5 912,3.8 Q916.5,4 916.5,7.5 Q915.5,10.5 912,11.8 L910,13 Q906.5,11 907,7.5 Z" fill="#38c828"/><ellipse cx="909.5" cy="9" rx="2" ry="2.5" fill="#70e060" opacity="0.7"/></g><rect x="0" y="623" width="383" height="97" fill="#62b2c8"/><rect x="383" y="646" width="574" height="70" fill="#0664a8"/><rect x="0" y="647" width="250" height="1" fill="#1a4060"/><rect x="1.5" y="623" width="248.5" height="24" rx="4" fill="#000"/><rect x="1.5" y="648" width="248.5" height="23" rx="4" fill="#000"/><circle cx="12" cy="636" r="9.7" fill="#f01010" shape-rendering="geometricPrecision"/><text transform="translate(12.3,642) scale(1,1.0)" fill="#280000" font-size="16" class="sans" font-weight="bold" text-anchor="middle">1</text><text transform="translate(22,643) scale(1,0.9)" fill="#e41414" font-size="20" stroke="#000" stroke-width="0.25" >5V-</text><text transform="translate(126,643) scale(1,0.9)" fill="#e41414" font-size="20" stroke="#000" stroke-width="0.25" >0.00div</text><circle cx="12" cy="660" r="9.8" fill="#e8e810" shape-rendering="geometricPrecision"/><text transform="translate(12.2,666.2) scale(1,1.0)" fill="#101000" font-size="17" class="sans" font-weight="bold" text-anchor="middle">2</text><text transform="translate(22,667) scale(1,0.9)" fill="#e2e23e" font-size="20" stroke="#000" stroke-width="0.25" >2V-</text><text transform="translate(126,667) scale(1,0.9)" fill="#e2e23e" font-size="20" stroke="#000" stroke-width="0.25" >0.00div</text><rect x="253" y="623" width="127" height="47" rx="6" fill="#000"/><text transform="translate(256,640.5) scale(1,0.9)" fill="#f4f4f4" font-size="20" stroke="#000" stroke-width="0.25" >(1.25KS/s)</text><text transform="translate(261,664.5) scale(1,0.9)" fill="#f4f4f4" font-size="20" stroke="#000" stroke-width="0.25" >Depth:10K</text><rect x="1" y="673" width="379" height="43" rx="5" fill="#000"/><circle cx="11.5" cy="684" r="9.8" fill="#e8e810" shape-rendering="geometricPrecision"/><text transform="translate(11.7,690.2) scale(1,1.0)" fill="#101000" font-size="17" class="sans" font-weight="bold" text-anchor="middle">2</text><circle cx="202" cy="684" r="9.8" fill="#e8e810" shape-rendering="geometricPrecision"/><text transform="translate(202.2,690.2) scale(1,1.0)" fill="#101000" font-size="17" class="sans" font-weight="bold" text-anchor="middle">2</text><circle cx="11.5" cy="707" r="9.8" fill="#e8e810" shape-rendering="geometricPrecision"/><text transform="translate(11.7,713.2) scale(1,1.0)" fill="#101000" font-size="17" class="sans" font-weight="bold" text-anchor="middle">2</text><circle cx="202" cy="707" r="9.8" fill="#e8e810" shape-rendering="geometricPrecision"/><text transform="translate(202.2,713.2) scale(1,1.0)" fill="#101000" font-size="17" class="sans" font-weight="bold" text-anchor="middle">2</text><text transform="translate(25,690) scale(1,0.9)" fill="#e2e23e" font-size="20" stroke="#000" stroke-width="0.25" >F:  ?</text><text transform="translate(25,713) scale(1,0.9)" fill="#e2e23e" font-size="20" stroke="#000" stroke-width="0.25" >+D:26.0%</text><text transform="translate(216,690) scale(1,0.9)" fill="#e2e23e" font-size="20" stroke="#000" stroke-width="0.25" >Vk:1.726v</text><text transform="translate(216,713) scale(1,0.9)" fill="#e2e23e" font-size="20" stroke="#000" stroke-width="0.25" >V:1.495v</text><rect x="383" y="623.5" width="118.5" height="21.5" rx="10.5" fill="#000"/><text transform="translate(398,640.5) scale(1,0.9)" fill="#f4f4f4" font-size="20" stroke="#000" stroke-width="0.25" >M:400ms</text><rect x="387" y="649" width="108" height="67" rx="3" fill="#0a3c8c"/><rect x="387" y="649" width="106" height="65" rx="3" fill="#50a8f0"/><rect x="389" y="651" width="104" height="62" rx="2" fill="#0a86e6"/><text transform="translate(414,674) scale(1,0.9)" fill="#0a2a66" font-size="20" stroke="#0a2a66" stroke-width="0.4">Type</text><rect x="409" y="685" width="60" height="24" fill="#e8e6e6"/><text transform="translate(408,703) scale(1,0.9)" fill="#101010" font-size="20" >Image</text><rect x="718" y="649" width="106" height="66" rx="3" fill="#0a3c8c"/><rect x="718" y="649" width="104" height="64" rx="3" fill="#50a8f0"/><rect x="720" y="651" width="102" height="61" rx="2" fill="#0a86e6"/><text transform="translate(745.5,689) scale(1,1.0)" fill="#0a2a66" font-size="17" class="sans" stroke="#0a2a66" stroke-width="0.5" letter-spacing="2.4">Save</text><rect x="798" y="624" width="155" height="21" rx="10.5" fill="#000"/><circle cx="810.5" cy="634.5" r="9.5" fill="#f01010" shape-rendering="geometricPrecision"/><text transform="translate(810.8,640.5) scale(1,1.0)" fill="#280000" font-size="16" class="sans" font-weight="bold" text-anchor="middle">1</text><path d="M822,642.5 H832.5 L836.5,626.5 H845.5" fill="none" stroke="#e0e0e0" stroke-width="1.5"/><text transform="translate(846,642) scale(1,0.9)" fill="#f4f4f4" font-size="20" stroke="#000" stroke-width="0.25" >0.00mV</text>
</g>
</svg>
</body></html>
